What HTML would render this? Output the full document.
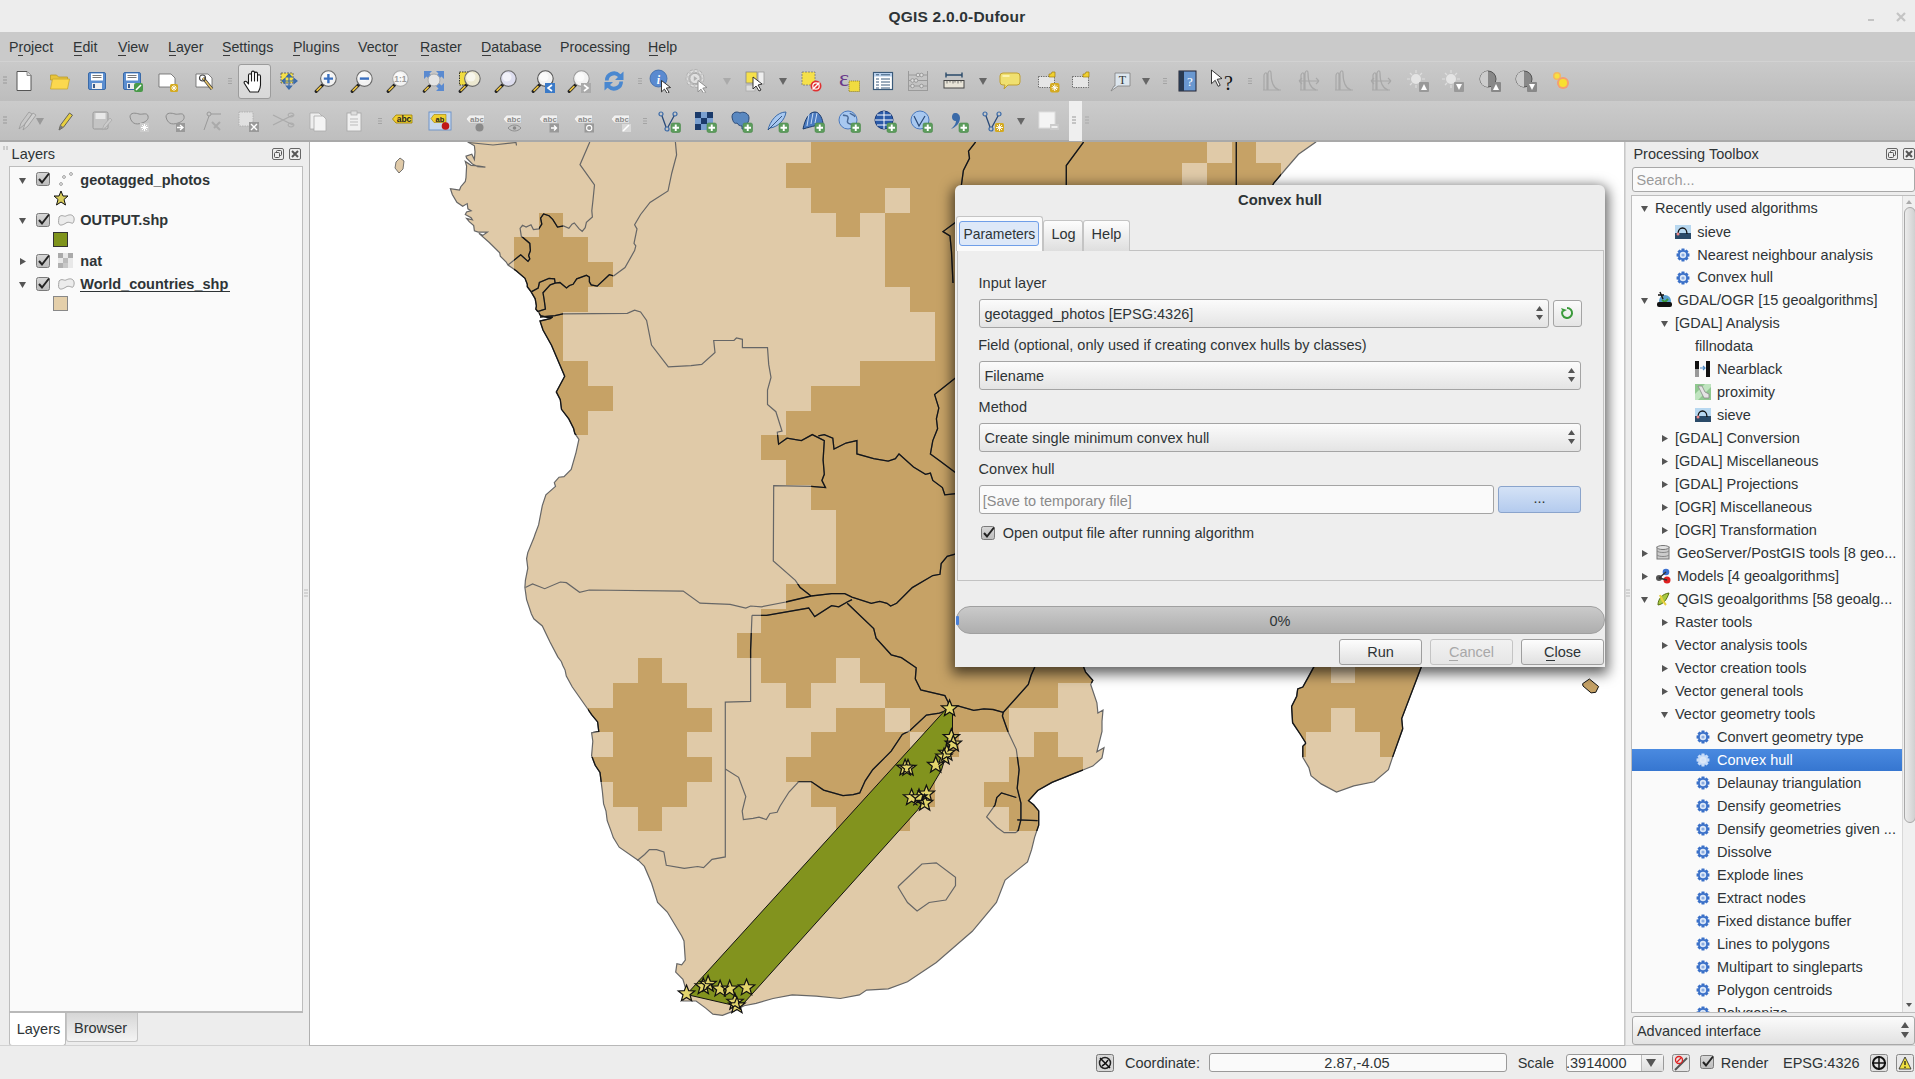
<!DOCTYPE html><html><head><meta charset="utf-8"><title>QGIS</title><style>
*{margin:0;padding:0;box-sizing:border-box}
html,body{width:1915px;height:1079px;overflow:hidden;background:#ededed;font-family:"Liberation Sans",sans-serif}
.t{position:absolute;white-space:pre;line-height:1.2;font-family:"Liberation Sans",sans-serif}
.r{position:absolute}
</style></head><body><div class="r" style="left:0px;top:0px;width:1915px;height:32px;background:#ededed"></div>
<div class="t" style="left:657.0px;width:600px;text-align:center;top:7.8px;font-size:15.5px;color:#2e3436;font-weight:bold;letter-spacing:0.2px">QGIS 2.0.0-Dufour</div>
<div class="r" style="left:1868px;top:19px;width:6px;height:2px;background:#c4c4c4"></div>
<svg class="r" style="left:1896px;top:12px" width="10" height="10" viewBox="0 0 10 10"><path d="M1 1l8 8M9 1l-8 8" stroke="#c4c4c4" stroke-width="2.2"/></svg>
<div class="r" style="left:0px;top:32px;width:1915px;height:30px;background:#cacaca"></div>
<div class="r" style="left:0px;top:61px;width:1915px;height:1px;background:#d2d2d2"></div>
<div class="t" style="left:9.0px;top:39.0px;font-size:14.2px;color:#2e3436;">Project</div>
<div class="t" style="left:73.0px;top:39.0px;font-size:14.2px;color:#2e3436;">Edit</div>
<div class="t" style="left:118.0px;top:39.0px;font-size:14.2px;color:#2e3436;">View</div>
<div class="t" style="left:168.0px;top:39.0px;font-size:14.2px;color:#2e3436;">Layer</div>
<div class="t" style="left:222.0px;top:39.0px;font-size:14.2px;color:#2e3436;">Settings</div>
<div class="t" style="left:293.0px;top:39.0px;font-size:14.2px;color:#2e3436;">Plugins</div>
<div class="t" style="left:358.0px;top:39.0px;font-size:14.2px;color:#2e3436;">Vector</div>
<div class="t" style="left:420.0px;top:39.0px;font-size:14.2px;color:#2e3436;">Raster</div>
<div class="t" style="left:481.0px;top:39.0px;font-size:14.2px;color:#2e3436;">Database</div>
<div class="t" style="left:560.0px;top:39.0px;font-size:14.2px;color:#2e3436;">Processing</div>
<div class="t" style="left:648.0px;top:39.0px;font-size:14.2px;color:#2e3436;">Help</div>
<div class="r" style="left:18px;top:55px;width:5px;height:1px;background:#3a3a3a"></div>
<div class="r" style="left:74px;top:55px;width:8px;height:1px;background:#3a3a3a"></div>
<div class="r" style="left:118px;top:55px;width:8px;height:1px;background:#3a3a3a"></div>
<div class="r" style="left:169px;top:55px;width:7px;height:1px;background:#3a3a3a"></div>
<div class="r" style="left:223px;top:55px;width:7px;height:1px;background:#3a3a3a"></div>
<div class="r" style="left:293px;top:55px;width:7px;height:1px;background:#3a3a3a"></div>
<div class="r" style="left:388px;top:55px;width:8px;height:1px;background:#3a3a3a"></div>
<div class="r" style="left:421px;top:55px;width:8px;height:1px;background:#3a3a3a"></div>
<div class="r" style="left:482px;top:55px;width:9px;height:1px;background:#3a3a3a"></div>
<div class="r" style="left:649px;top:55px;width:9px;height:1px;background:#3a3a3a"></div>
<div class="r" style="left:0px;top:62px;width:1915px;height:39px;background:linear-gradient(#cacaca,#bdbdbd)"></div>
<div class="r" style="left:238px;top:64px;width:33px;height:35px;background:linear-gradient(#e4e4e4,#d8d8d8);border:1px solid #9c9c9c;border-radius:3px"></div>
<svg class="r" style="left:12px;top:69px" width="24" height="24" viewBox="0 0 24 24"><path d="M5 2.5h10l4 4v15H5z" fill="#fff" stroke="#555" stroke-width="1"/><path d="M15 2.5v4h4" fill="#ddd" stroke="#777" stroke-width="0.8"/></svg>
<svg class="r" style="left:48px;top:69px" width="24" height="24" viewBox="0 0 24 24"><path d="M2.5 6h6l2 2h9v3H2.5z" fill="#e8c43a" stroke="#b89a2a" stroke-width="0.8"/><path d="M2.5 20l2-10h17l-2 10z" fill="#fbd84e" stroke="#c8a830" stroke-width="0.8"/></svg>
<svg class="r" style="left:85px;top:69px" width="24" height="24" viewBox="0 0 24 24"><rect x="3.5" y="3.5" width="17" height="17" rx="1.5" fill="#5b8ed0" stroke="#3a6aa8" stroke-width="1"/><rect x="6" y="4.5" width="12" height="7" fill="#fff"/><path d="M7.5 6.5h9M7.5 8.5h9" stroke="#555" stroke-width="0.8"/><rect x="7" y="14" width="10" height="6" fill="#eee"/><rect x="8" y="15" width="2" height="4" fill="#3a5a88"/></svg>
<svg class="r" style="left:120px;top:69px" width="24" height="24" viewBox="0 0 24 24"><rect x="3.5" y="3.5" width="17" height="17" rx="1.5" fill="#5b8ed0" stroke="#3a6aa8" stroke-width="1"/><rect x="6" y="4.5" width="12" height="7" fill="#fff"/><path d="M7.5 6.5h9M7.5 8.5h9" stroke="#555" stroke-width="0.8"/><rect x="7" y="14" width="10" height="6" fill="#eee"/><rect x="8" y="15" width="2" height="4" fill="#3a5a88"/><rect x="14" y="14" width="9" height="9" rx="2" fill="#4a9a4a"/><path d="M16 21l5-5" stroke="#fff" stroke-width="1.6"/></svg>
<svg class="r" style="left:156px;top:69px" width="24" height="24" viewBox="0 0 24 24"><path d="M3 5h12l4 4v9H3z" fill="#fff" stroke="#666" stroke-width="0.8"/><rect x="14" y="15" width="8" height="8" rx="1.5" fill="#d4aa20"/><path d="M18 16v6M15 19h6M16 17l4 4M20 17l-4 4" stroke="#fff" stroke-width="0.9"/></svg>
<svg class="r" style="left:193px;top:69px" width="24" height="24" viewBox="0 0 24 24"><path d="M3 5h12l4 4v9H3z" fill="#fff" stroke="#666" stroke-width="0.8"/><path d="M10 9l9 11" stroke="#333" stroke-width="3"/><path d="M10 9l9 11" stroke="#e4c26a" stroke-width="1.8"/><circle cx="9.5" cy="9" r="3" fill="none" stroke="#444" stroke-width="1.2"/></svg>
<svg class="r" style="left:218px;top:69px" width="24" height="24" viewBox="0 0 24 24"><path d="M10 9.5h4M10 12h4M10 14.5h4" stroke="#a4a4a4" stroke-width="1"/></svg>
<svg class="r" style="left:242px;top:69px" width="24" height="24" viewBox="0 0 24 24"><path d="M8 23C6 20 4 17 2.3 14.2C1.6 12.7 3.4 11.6 4.8 12.9L6.5 15V6.2C6.5 4.2 9.5 4.2 9.5 6.2V12V3.6C9.5 1.6 12.5 1.6 12.5 3.6V12V4.6C12.5 2.6 15.5 2.6 15.5 4.6V12V7.2C15.5 5.2 18.5 5.2 18.5 7.2V16C18.5 19 17.2 21 16.2 23Z" fill="#fff" stroke="#1a1a1a" stroke-width="1.1" stroke-linejoin="round"/></svg>
<svg class="r" style="left:277px;top:69px" width="24" height="24" viewBox="0 0 24 24"><rect x="4" y="4" width="12" height="10" fill="#f5e04a" stroke="#555" stroke-dasharray="2 1" stroke-width="0.8"/><path d="M12 6v13M6 12h13M12 5l-2.5 3h5zM12 20l-2.5-3h5zM5 12l3-2.5v5zM20 12l-3-2.5v5z" fill="#5b8ed0" stroke="#3a6aa8" stroke-width="1.2"/></svg>
<svg class="r" style="left:314px;top:69px" width="24" height="24" viewBox="0 0 24 24"><path d="M2.2 22.3L8.6 15.9" stroke="#222" stroke-width="3.2" stroke-linecap="round"/><path d="M2.6 21.9L7.4 17.1" stroke="#e8c040" stroke-width="1.7"/><circle cx="14.4" cy="9.6" r="7.8" fill="#f2f2f2" stroke="#6a6a6a" stroke-width="1.1"/><circle cx="13" cy="8" r="4.5" fill="#fff" opacity="0.6"/><path d="M9.8 9.6h9.2M14.4 5v9.2" stroke="#3a70c0" stroke-width="2.4"/></svg>
<svg class="r" style="left:350px;top:69px" width="24" height="24" viewBox="0 0 24 24"><path d="M2.2 22.3L8.6 15.9" stroke="#222" stroke-width="3.2" stroke-linecap="round"/><path d="M2.6 21.9L7.4 17.1" stroke="#e8c040" stroke-width="1.7"/><circle cx="14.4" cy="9.6" r="7.8" fill="#f2f2f2" stroke="#6a6a6a" stroke-width="1.1"/><circle cx="13" cy="8" r="4.5" fill="#fff" opacity="0.6"/><path d="M9.8 9.6h9.2" stroke="#3a70c0" stroke-width="2.4"/></svg>
<svg class="r" style="left:386px;top:69px" width="24" height="24" viewBox="0 0 24 24"><path d="M2.2 22.3L8.6 15.9" stroke="#222" stroke-width="3.2" stroke-linecap="round"/><path d="M2.6 21.9L7.4 17.1" stroke="#e8c040" stroke-width="1.7"/><circle cx="14.4" cy="9.6" r="7.8" fill="#f2f2f2" stroke="#aaa" stroke-width="1.1"/><circle cx="13" cy="8" r="4.5" fill="#fff" opacity="0.6"/><text x="14.4" y="12.8" font-size="8.5" font-weight="bold" text-anchor="middle" fill="#9a9a9a" font-family="Liberation Sans">1:1</text></svg>
<svg class="r" style="left:422px;top:69px" width="24" height="24" viewBox="0 0 24 24"><path d="M2 2h8l-2.5 2.5 3 3-3 3-3-3L2 10z" fill="#5a8ad0"/><path d="M22 2h-8l2.5 2.5-3 3 3 3 3-3L22 10z" fill="#5a8ad0"/><path d="M22 22h-8l2.5-2.5-3-3 3-3 3 3L22 14z" fill="#5a8ad0"/><circle cx="12" cy="11" r="6" fill="#e4e4e4" stroke="#aaa"/><path d="M2.2 22.3L7.5 17" stroke="#222" stroke-width="3" stroke-linecap="round"/><path d="M2.6 21.9L6.6 17.9" stroke="#e8c040" stroke-width="1.6"/></svg>
<svg class="r" style="left:458px;top:69px" width="24" height="24" viewBox="0 0 24 24"><rect x="1.5" y="3" width="13" height="13" fill="#f0dc40" stroke="#222" stroke-dasharray="1.5 1" stroke-width="0.9"/><path d="M2.2 22.3L8.6 15.9" stroke="#222" stroke-width="3.2" stroke-linecap="round"/><path d="M2.6 21.9L7.4 17.1" stroke="#e8c040" stroke-width="1.7"/><circle cx="14.4" cy="9.6" r="7.8" fill="#ece8d0" stroke="#6a6a6a" stroke-width="1.1"/><circle cx="13" cy="8" r="4.5" fill="#fff" opacity="0.6"/></svg>
<svg class="r" style="left:494px;top:69px" width="24" height="24" viewBox="0 0 24 24"><path d="M2.2 22.3L8.6 15.9" stroke="#222" stroke-width="3.2" stroke-linecap="round"/><path d="M2.6 21.9L7.4 17.1" stroke="#e8c040" stroke-width="1.7"/><circle cx="14.4" cy="9.6" r="7.8" fill="#dde" stroke="#6a6a6a" stroke-width="1.1"/><circle cx="13" cy="8" r="4.5" fill="#fff" opacity="0.6"/></svg>
<svg class="r" style="left:531px;top:69px" width="24" height="24" viewBox="0 0 24 24"><path d="M2.2 22.3L8.6 15.9" stroke="#222" stroke-width="3.2" stroke-linecap="round"/><path d="M2.6 21.9L7.4 17.1" stroke="#e8c040" stroke-width="1.7"/><circle cx="14.4" cy="9.6" r="7.8" fill="#f2f2f2" stroke="#555" stroke-width="1.1"/><circle cx="13" cy="8" r="4.5" fill="#fff" opacity="0.6"/><rect x="14" y="14" width="10" height="10" fill="#3a7ac8"/><path d="M21 16l-4 3 4 3" stroke="#fff" stroke-width="1.6" fill="none"/></svg>
<svg class="r" style="left:567px;top:69px" width="24" height="24" viewBox="0 0 24 24"><path d="M2.2 22.3L8.6 15.9" stroke="#222" stroke-width="3.2" stroke-linecap="round"/><path d="M2.6 21.9L7.4 17.1" stroke="#e8c040" stroke-width="1.7"/><circle cx="14.4" cy="9.6" r="7.8" fill="#f2f2f2" stroke="#999" stroke-width="1.1"/><circle cx="13" cy="8" r="4.5" fill="#fff" opacity="0.6"/><rect x="14" y="14" width="10" height="10" fill="#aaa"/><path d="M17 16l4 3-4 3" stroke="#fff" stroke-width="1.6" fill="none"/></svg>
<svg class="r" style="left:602px;top:69px" width="24" height="24" viewBox="0 0 24 24"><path d="M3 11.5A9 9 0 0 1 18.5 5.2L21.5 2.5V11H13l3-3A5.5 5.5 0 0 0 6.6 11.5z" fill="#4a88d0"/><path d="M21 12.5A9 9 0 0 1 5.5 18.8L2.5 21.5V13H11l-3 3a5.5 5.5 0 0 0 9.4-3.5z" fill="#4a88d0"/></svg>
<svg class="r" style="left:628px;top:69px" width="24" height="24" viewBox="0 0 24 24"><path d="M10 9.5h4M10 12h4M10 14.5h4" stroke="#a4a4a4" stroke-width="1"/></svg>
<svg class="r" style="left:649px;top:69px" width="24" height="24" viewBox="0 0 24 24"><circle cx="9.5" cy="9.5" r="8.5" fill="#5a8ad0" stroke="#3a68a8" stroke-width="0.8"/><text x="9.5" y="14.5" font-size="12" font-style="italic" font-weight="bold" text-anchor="middle" fill="#fff" font-family="Liberation Serif">i</text><path d="M12.5 11.5l9 7-4.2.6 2.8 4.2-1.9 1.1-2.8-4.3-2.9 2.8z" fill="#fff" stroke="#222" stroke-width="0.9"/></svg>
<svg class="r" style="left:685px;top:69px" width="24" height="24" viewBox="0 0 24 24"><circle cx="10" cy="9.5" r="7.6" fill="none" stroke="#a8a8a8" stroke-width="3.4" stroke-dasharray="2.8 1.6"/><circle cx="10" cy="9.5" r="7.6" fill="none" stroke="#dcdcdc" stroke-width="2" stroke-dasharray="2.8 1.6"/><circle cx="10" cy="9.5" r="5.2" fill="#e0e0e0" stroke="#a8a8a8" stroke-width="1"/><path d="M8.8 7v5l3.6-2.5z" fill="#b0b0b0"/><path d="M13 11.5l9 7-4.2.6 2.8 4.2-1.9 1.1-2.8-4.3-2.9 2.8z" fill="#fff" stroke="#888" stroke-width="0.9"/></svg>
<svg class="r" style="left:715px;top:69px" width="24" height="24" viewBox="0 0 24 24"><path d="M8 9h8l-4 7z" fill="#aaa"/></svg>
<svg class="r" style="left:743px;top:69px" width="24" height="24" viewBox="0 0 24 24"><rect x="3" y="3" width="11" height="11" fill="#f5e04a" stroke="#888" stroke-width="0.8"/><rect x="15" y="3" width="6" height="12" fill="#eee" stroke="#999" stroke-width="0.8"/><rect x="3" y="16" width="9" height="6" fill="#ddd" stroke="#aaa" stroke-width="0.8"/><path d="M10 8l9 7-4 1 3 5-2 1-3-5-3 3z" fill="#fff" stroke="#222" stroke-width="0.9"/></svg>
<svg class="r" style="left:771px;top:69px" width="24" height="24" viewBox="0 0 24 24"><path d="M8 9h8l-4 7z" fill="#666"/></svg>
<svg class="r" style="left:799px;top:69px" width="24" height="24" viewBox="0 0 24 24"><rect x="3" y="3" width="13" height="13" fill="#f5e04a" stroke="#777" stroke-dasharray="2 1" stroke-width="0.8"/><circle cx="17" cy="17" r="5.5" fill="#e03030"/><path d="M13.5 20.5l7-7" stroke="#fff" stroke-width="1.5"/><circle cx="17" cy="17" r="3.2" fill="none" stroke="#fff" stroke-width="1.2"/></svg>
<svg class="r" style="left:837px;top:69px" width="24" height="24" viewBox="0 0 24 24"><text x="7" y="17" font-size="24" fill="#6a3a8a" font-family="Liberation Serif" text-anchor="middle">ε</text><rect x="12" y="12" width="10.5" height="10.5" fill="#f0dc40" stroke="#8a7a20" stroke-dasharray="1.2 0.8" stroke-width="0.8"/></svg>
<svg class="r" style="left:871px;top:69px" width="24" height="24" viewBox="0 0 24 24"><rect x="2.5" y="3.5" width="19" height="17" fill="#fff" stroke="#3a5a7a" stroke-width="1.2"/><rect x="3" y="4" width="18" height="3.5" fill="#b8d0ec"/><path d="M5 5.8h3M10 5.8h9M5 10h3M10 10h9M5 13h3M10 13h9M5 16h3M10 16h9M5 19h3M10 19h9" stroke="#3a5a7a" stroke-width="1"/></svg>
<svg class="r" style="left:906px;top:69px" width="24" height="24" viewBox="0 0 24 24"><path d="M2.5 2v20M21.5 2v20M2.5 21.5h19M2.5 6h19M2.5 11.5h19M2.5 17h19" stroke="#9a9a9a" stroke-width="1"/><circle cx="12" cy="6" r="1.8" fill="#ddd" stroke="#999"/><circle cx="15.5" cy="6" r="1.8" fill="#ddd" stroke="#999"/><circle cx="6.5" cy="11.5" r="1.8" fill="#ddd" stroke="#999"/><circle cx="10" cy="11.5" r="1.8" fill="#ddd" stroke="#999"/><circle cx="6.5" cy="17" r="1.8" fill="#ddd" stroke="#999"/><circle cx="15.5" cy="17" r="1.8" fill="#ddd" stroke="#999"/></svg>
<svg class="r" style="left:942px;top:69px" width="24" height="24" viewBox="0 0 24 24"><path d="M4 6h16M4 3.5v5M20 3.5v5" stroke="#2a4a6a" stroke-width="1.4"/><rect x="2" y="11.5" width="20" height="7.5" fill="#e8e4d8" stroke="#444" stroke-width="1"/><path d="M5 11.5v3M8 11.5v2M11 11.5v3M13 11.5v2M16 11.5v3M19 11.5v2" stroke="#555" stroke-width="0.8"/></svg>
<svg class="r" style="left:971px;top:69px" width="24" height="24" viewBox="0 0 24 24"><path d="M8 9h8l-4 7z" fill="#666"/></svg>
<svg class="r" style="left:998px;top:69px" width="24" height="24" viewBox="0 0 24 24"><path d="M5 4h14a3 3 0 0 1 3 3v6a3 3 0 0 1-3 3h-9l-4 4 1-4H5a3 3 0 0 1-3-3V7a3 3 0 0 1 3-3z" fill="#f0e070" stroke="#c0a030" stroke-width="1"/><path d="M5 7h6" stroke="#fff8c0" stroke-width="1.5" stroke-linecap="round"/></svg>
<svg class="r" style="left:1036px;top:69px" width="24" height="24" viewBox="0 0 24 24"><rect x="2.5" y="7.5" width="16" height="11" fill="#e6e6e6" stroke="#555" stroke-dasharray="1.2 1.2" stroke-width="0.9"/><path d="M13 5h2l1-2h3v5h-6z" fill="#f0d030" stroke="#a08010" stroke-width="0.7"/><rect x="14" y="14" width="9.5" height="9.5" rx="2" fill="#d4aa20"/><path d="M18.75 15.5v6.5M15.5 18.75h6.5M16.5 16.5l4.5 4.5M21 16.5l-4.5 4.5" stroke="#fff" stroke-width="1"/></svg>
<svg class="r" style="left:1070px;top:69px" width="24" height="24" viewBox="0 0 24 24"><rect x="2.5" y="7.5" width="16" height="11" fill="#e6e6e6" stroke="#555" stroke-dasharray="1.2 1.2" stroke-width="0.9"/><path d="M13 5h2l1-2h3v5h-6z" fill="#f0d030" stroke="#a08010" stroke-width="0.7"/></svg>
<svg class="r" style="left:1108px;top:69px" width="24" height="24" viewBox="0 0 24 24"><path d="M7 4h15v13H10l-7 5 3-5H7z" fill="#dce6ee" stroke="#888" stroke-width="0.9"/><text x="14.5" y="14.5" font-size="12" text-anchor="middle" fill="#333" font-family="Liberation Serif">T</text></svg>
<svg class="r" style="left:1134px;top:69px" width="24" height="24" viewBox="0 0 24 24"><path d="M8 9h8l-4 7z" fill="#666"/></svg>
<svg class="r" style="left:1153px;top:69px" width="24" height="24" viewBox="0 0 24 24"><path d="M10 9.5h4M10 12h4M10 14.5h4" stroke="#a4a4a4" stroke-width="1"/></svg>
<svg class="r" style="left:1175px;top:69px" width="24" height="24" viewBox="0 0 24 24"><rect x="4" y="2" width="17" height="20" fill="#6a98d0" stroke="#223" stroke-width="1"/><rect x="4" y="2" width="5" height="20" fill="#2a3a50"/><text x="15" y="16.5" font-size="13" text-anchor="middle" fill="#fff" font-family="Liberation Serif">?</text></svg>
<svg class="r" style="left:1210px;top:69px" width="24" height="24" viewBox="0 0 24 24"><path d="M1.5 1l10.5 8.5-4.8.8 3 6-2 1-3-6-3.7 3.4z" fill="#fff" stroke="#222" stroke-width="0.9"/><text x="18.5" y="21" font-size="20" text-anchor="middle" fill="#111" font-family="Liberation Serif">?</text></svg>
<svg class="r" style="left:1238px;top:69px" width="24" height="24" viewBox="0 0 24 24"><path d="M10 9.5h4M10 12h4M10 14.5h4" stroke="#a4a4a4" stroke-width="1"/></svg>
<svg class="r" style="left:1260px;top:69px" width="24" height="24" viewBox="0 0 24 24"><path d="M4 21V6c1-3 3-3 3 0v15M8 21V4c1-3 3-3 3 0 0 8 2 15 8 17" fill="none" stroke="#a8a8a8" stroke-width="1.2"/><path d="M3 21h18" stroke="#a8a8a8"/></svg>
<svg class="r" style="left:1297px;top:69px" width="24" height="24" viewBox="0 0 24 24"><path d="M4 21V6c1-3 3-3 3 0v15M8 21V4c1-3 3-3 3 0 0 8 2 15 8 17" fill="none" stroke="#a8a8a8" stroke-width="1.2"/><path d="M3 21h18" stroke="#a8a8a8"/><path d="M2 12h20M2 12l3-3M2 12l3 3M22 12l-3-3M22 12l-3 3" stroke="#a8a8a8" stroke-width="1.1" fill="none"/></svg>
<svg class="r" style="left:1332px;top:69px" width="24" height="24" viewBox="0 0 24 24"><path d="M4 21V6c1-3 3-3 3 0v15M8 21V4c1-3 3-3 3 0 0 8 2 15 8 17" fill="none" stroke="#a8a8a8" stroke-width="1.2"/><path d="M3 21h18" stroke="#a8a8a8"/></svg>
<svg class="r" style="left:1369px;top:69px" width="24" height="24" viewBox="0 0 24 24"><path d="M4 21V6c1-3 3-3 3 0v15M8 21V4c1-3 3-3 3 0 0 8 2 15 8 17" fill="none" stroke="#a8a8a8" stroke-width="1.2"/><path d="M3 21h18" stroke="#a8a8a8"/><path d="M2 12h20M2 12l3-3M2 12l3 3M22 12l-3-3M22 12l-3 3" stroke="#a8a8a8" stroke-width="1.1" fill="none"/></svg>
<svg class="r" style="left:1406px;top:69px" width="24" height="24" viewBox="0 0 24 24"><circle cx="10" cy="10" r="5" fill="#e4e4e4"/><path d="M10 1v3M10 16v3M1 10h3M16 10h3M4 4l2 2M14 14l2 2M4 16l2-2M14 6l2-2" stroke="#ddd" stroke-width="1.2"/><rect x="13" y="13" width="10" height="10" rx="1" fill="#999"/><path d="M15 21h6l-3-6z" fill="#fff"/></svg>
<svg class="r" style="left:1441px;top:69px" width="24" height="24" viewBox="0 0 24 24"><circle cx="10" cy="10" r="5" fill="#e4e4e4"/><path d="M10 1v3M10 16v3M1 10h3M16 10h3M4 4l2 2M14 14l2 2M4 16l2-2M14 6l2-2" stroke="#ddd" stroke-width="1.2"/><rect x="13" y="13" width="10" height="10" rx="1" fill="#999"/><path d="M15 15h6l-3 6z" fill="#fff"/></svg>
<svg class="r" style="left:1478px;top:69px" width="24" height="24" viewBox="0 0 24 24"><circle cx="10" cy="10" r="8" fill="#888" stroke="#555" stroke-width="1"/><path d="M10 2a8 8 0 0 0 0 16z" fill="#ccc"/><rect x="13" y="13" width="10" height="10" rx="1" fill="#888"/><path d="M15 21h6l-3-6z" fill="#fff"/></svg>
<svg class="r" style="left:1514px;top:69px" width="24" height="24" viewBox="0 0 24 24"><circle cx="10" cy="10" r="8" fill="#888" stroke="#555" stroke-width="1"/><path d="M10 2a8 8 0 0 0 0 16z" fill="#ccc"/><rect x="13" y="13" width="10" height="10" rx="1" fill="#888"/><path d="M15 15h6l-3 6z" fill="#fff"/></svg>
<svg class="r" style="left:1549px;top:69px" width="24" height="24" viewBox="0 0 24 24"><circle cx="8" cy="7" r="4" fill="#f4b860"/><circle cx="8" cy="7" r="2.5" fill="#f8e040"/><circle cx="14" cy="14" r="6" fill="#f4a070"/><circle cx="14" cy="14" r="4" fill="#f8e030"/></svg>
<svg class="r" style="left:2px;top:75px" width="6" height="12" viewBox="0 0 6 12"><path d="M1 2h4M1 5h4M1 8h4" stroke="#999"/></svg>
<div class="r" style="left:0px;top:101px;width:1915px;height:40px;background:linear-gradient(#cbcbcb,#bebebe)"></div>
<div class="r" style="left:0px;top:140px;width:1915px;height:2px;background:#a9a9a9"></div>
<svg class="r" style="left:15px;top:109px" width="24" height="24" viewBox="0 0 24 24"><path d="M4 20l2-6 8-11 3 2-8 11z" fill="#c8c8c8" stroke="#999" stroke-width="0.8"/><path d="M8 21l2-6 8-11 3 2-8 11z" fill="#cfcfcf" stroke="#999" stroke-width="0.8"/></svg>
<svg class="r" style="left:28px;top:109px" width="24" height="24" viewBox="0 0 24 24"><path d="M8 9h8l-4 7z" fill="#999"/></svg>
<svg class="r" style="left:54px;top:109px" width="24" height="24" viewBox="0 0 24 24"><path d="M5 21l1.5-5 9-12 3 2.2-9 12z" fill="#e8d040" stroke="#555" stroke-width="0.9"/><path d="M5 21l1.5-5 3 2.2z" fill="#777"/></svg>
<svg class="r" style="left:90px;top:109px" width="24" height="24" viewBox="0 0 24 24"><rect x="3" y="3" width="15" height="17" rx="1.5" fill="#c4c4c4" stroke="#999" stroke-width="1"/><rect x="5.5" y="4" width="10" height="6" fill="#e8e8e8"/><path d="M12 21l2-5 6-7 2 2-6 7z" fill="#ccc" stroke="#aaa" stroke-width="0.8"/></svg>
<svg class="r" style="left:127px;top:109px" width="24" height="24" viewBox="0 0 24 24"><path d="M3 8c0-5 6-4 9-3s8-2 9 2-3 6-6 7-10 3-12-6z" fill="#c4c4c4" stroke="#8c8c8c" stroke-width="1"/><rect x="13" y="14" width="9" height="9" fill="#ccc"/><path d="M17.5 15v7M14 18.5h7M15 16l5 5M20 16l-5 5" stroke="#fff" stroke-width="1"/></svg>
<svg class="r" style="left:163px;top:109px" width="24" height="24" viewBox="0 0 24 24"><path d="M3 8c0-5 6-4 9-3s8-2 9 2-3 6-6 7-10 3-12-6z" fill="#c4c4c4" stroke="#8c8c8c" stroke-width="1"/><rect x="13" y="14" width="9" height="9" fill="#999"/><path d="M14 18.5h5M17 16l3 2.5-3 2.5" stroke="#fff" stroke-width="1.3" fill="none"/></svg>
<svg class="r" style="left:200px;top:109px" width="24" height="24" viewBox="0 0 24 24"><circle cx="9" cy="5" r="2" fill="none" stroke="#999"/><path d="M9 7L4 21M11 5h10" stroke="#999"/><path d="M12 13l8 8M20 13l-6 6" stroke="#aaa" stroke-width="2"/></svg>
<svg class="r" style="left:236px;top:109px" width="24" height="24" viewBox="0 0 24 24"><rect x="3" y="3" width="14" height="14" fill="#e0e0e0" stroke="#aaa" stroke-dasharray="1.5 1" stroke-width="0.8"/><rect x="13" y="13" width="10" height="10" fill="#999"/><path d="M15 15l6 6M21 15l-6 6" stroke="#fff" stroke-width="1.4"/></svg>
<svg class="r" style="left:271px;top:109px" width="24" height="24" viewBox="0 0 24 24"><path d="M2 6l20 10M2 16l20-10" stroke="#aaa" stroke-width="1.2"/><ellipse cx="20" cy="6" rx="3" ry="2" fill="none" stroke="#aaa"/><ellipse cx="20" cy="16" rx="3" ry="2" fill="none" stroke="#aaa"/></svg>
<svg class="r" style="left:306px;top:109px" width="24" height="24" viewBox="0 0 24 24"><path d="M4 4h9l3 3v13H4z" fill="#eee" stroke="#aaa" stroke-width="0.8"/><path d="M8 7h9l3 3v12H8z" fill="#f4f4f4" stroke="#aaa" stroke-width="0.8"/></svg>
<svg class="r" style="left:342px;top:109px" width="24" height="24" viewBox="0 0 24 24"><rect x="5" y="4" width="14" height="18" fill="#f0f0f0" stroke="#aaa" stroke-width="0.9"/><rect x="9" y="2" width="6" height="4" fill="#ddd" stroke="#aaa" stroke-width="0.7"/><path d="M8 10h8M8 13h8M8 16h8" stroke="#bbb"/></svg>
<svg class="r" style="left:368px;top:109px" width="24" height="24" viewBox="0 0 24 24"><path d="M10 9.5h4M10 12h4M10 14.5h4" stroke="#a4a4a4" stroke-width="1"/></svg>
<svg class="r" style="left:390px;top:109px" width="24" height="24" viewBox="0 0 24 24"><path d="M2.5 10l3.5-4h16v8H6z" fill="#f0d030" stroke="#a08000" stroke-width="0.8"/><text x="14" y="13.2" font-size="8.5" font-weight="bold" text-anchor="middle" fill="#222" font-family="Liberation Sans">abc</text></svg>
<svg class="r" style="left:428px;top:109px" width="24" height="24" viewBox="0 0 24 24"><rect x="1" y="3" width="22" height="18" fill="#c8d8ec" stroke="#6890c8" stroke-width="0.9"/><path d="M3 9.5l3-4h12v8H6z" fill="#f0d030" stroke="#a08000" stroke-width="0.6"/><text x="12" y="12.5" font-size="7.5" font-weight="bold" text-anchor="middle" fill="#222" font-family="Liberation Sans">ab</text><circle cx="17.5" cy="17" r="3.8" fill="#c01818"/></svg>
<svg class="r" style="left:463px;top:109px" width="24" height="24" viewBox="0 0 24 24"><path d="M3 10l3.5-4h15v8H6.5z" fill="#f0f0f0" stroke="#bbb" stroke-width="0.7"/><text x="14" y="13" font-size="8" font-weight="bold" text-anchor="middle" fill="#8a8a8a" font-family="Liberation Sans">abc</text><circle cx="16.5" cy="18.5" r="4" fill="#8a8a8a"/></svg>
<svg class="r" style="left:500px;top:109px" width="24" height="24" viewBox="0 0 24 24"><path d="M3 10l3.5-4h15v8H6.5z" fill="#f0f0f0" stroke="#bbb" stroke-width="0.7"/><text x="14" y="13" font-size="8" font-weight="bold" text-anchor="middle" fill="#8a8a8a" font-family="Liberation Sans">abc</text><path d="M8 19c3.5-4 9.5-4 13 0-3.5 4-9.5 4-13 0z" fill="none" stroke="#888" stroke-width="0.9"/><circle cx="14.5" cy="19" r="1.8" fill="#888"/></svg>
<svg class="r" style="left:536px;top:109px" width="24" height="24" viewBox="0 0 24 24"><path d="M3 10l3.5-4h15v8H6.5z" fill="#f0f0f0" stroke="#bbb" stroke-width="0.7"/><text x="14" y="13" font-size="8" font-weight="bold" text-anchor="middle" fill="#8a8a8a" font-family="Liberation Sans">abc</text><rect x="13.5" y="14.5" width="9.5" height="9" fill="#999"/><path d="M15 19h5M18 16.5l2.5 2.5-2.5 2.5" stroke="#fff" stroke-width="1.4" fill="none"/></svg>
<svg class="r" style="left:571px;top:109px" width="24" height="24" viewBox="0 0 24 24"><path d="M3 10l3.5-4h15v8H6.5z" fill="#f0f0f0" stroke="#bbb" stroke-width="0.7"/><text x="14" y="13" font-size="8" font-weight="bold" text-anchor="middle" fill="#8a8a8a" font-family="Liberation Sans">abc</text><rect x="13.5" y="14.5" width="9.5" height="9" fill="#999"/><circle cx="18.2" cy="19" r="2.6" fill="none" stroke="#fff" stroke-width="1.1"/></svg>
<svg class="r" style="left:608px;top:109px" width="24" height="24" viewBox="0 0 24 24"><path d="M3 10l3.5-4h15v8H6.5z" fill="#f0f0f0" stroke="#bbb" stroke-width="0.7"/><text x="14" y="13" font-size="8" font-weight="bold" text-anchor="middle" fill="#8a8a8a" font-family="Liberation Sans">abc</text><rect x="14" y="15" width="9" height="8" fill="#d8d8d8"/><path d="M15 22l6-6" stroke="#fff" stroke-width="1.6"/></svg>
<svg class="r" style="left:633px;top:109px" width="24" height="24" viewBox="0 0 24 24"><path d="M10 9.5h4M10 12h4M10 14.5h4" stroke="#a4a4a4" stroke-width="1"/></svg>
<svg class="r" style="left:657px;top:109px" width="24" height="24" viewBox="0 0 24 24"><circle cx="4" cy="5" r="2" fill="none" stroke="#3a6aa8" stroke-width="1.2"/><circle cx="18" cy="5" r="2" fill="none" stroke="#3a6aa8" stroke-width="1.2"/><circle cx="10" cy="20" r="2" fill="none" stroke="#3a6aa8" stroke-width="1.2"/><path d="M5 7l4 11M11 18l6-11" stroke="#2a4a78" stroke-width="1.3"/><rect x="14" y="14" width="9.5" height="9.5" rx="1.8" fill="#5c9c5c" stroke="#4a8a4a" stroke-width="0.6"/><path d="M18.75 15.5v6.5M15.5 18.75h6.5" stroke="#fff" stroke-width="1.9"/></svg>
<svg class="r" style="left:693px;top:109px" width="24" height="24" viewBox="0 0 24 24"><rect x="2" y="3" width="18" height="18" fill="#7aa0d0"/><rect x="2" y="3" width="6" height="6" fill="#1a3a6a"/><rect x="14" y="3" width="6" height="6" fill="#1a3a6a"/><rect x="8" y="9" width="6" height="6" fill="#1a3a6a"/><rect x="2" y="15" width="6" height="6" fill="#1a3a6a"/><rect x="14" y="14" width="9.5" height="9.5" rx="1.8" fill="#5c9c5c" stroke="#4a8a4a" stroke-width="0.6"/><path d="M18.75 15.5v6.5M15.5 18.75h6.5" stroke="#fff" stroke-width="1.9"/></svg>
<svg class="r" style="left:729px;top:109px" width="24" height="24" viewBox="0 0 24 24"><path d="M3 8c0-5 5-6 8-4 3-2 9 0 9 5 0 4-2 6-4 7v4h-3v-3c-2 0-4-1-5-3-2 1-4 0-5-6z" fill="#5a88c0" stroke="#2a4a78" stroke-width="1"/><rect x="14" y="14" width="9.5" height="9.5" rx="1.8" fill="#5c9c5c" stroke="#4a8a4a" stroke-width="0.6"/><path d="M18.75 15.5v6.5M15.5 18.75h6.5" stroke="#fff" stroke-width="1.9"/></svg>
<svg class="r" style="left:765px;top:109px" width="24" height="24" viewBox="0 0 24 24"><path d="M3 21C5 12 12 3 21 3c-1 8-8 15-16 16z" fill="#a8c8f0" stroke="#3a6aa8" stroke-width="1"/><path d="M3 21L17 7" stroke="#2a4a78" stroke-width="0.9"/><rect x="14" y="14" width="9.5" height="9.5" rx="1.8" fill="#5c9c5c" stroke="#4a8a4a" stroke-width="0.6"/><path d="M18.75 15.5v6.5M15.5 18.75h6.5" stroke="#fff" stroke-width="1.9"/></svg>
<svg class="r" style="left:801px;top:109px" width="24" height="24" viewBox="0 0 24 24"><path d="M2 20C4 10 8 3 14 3c5 0 8 8 8 12-4 1-10 2-20 5z" fill="#4a7ac0" stroke="#1a3a6a" stroke-width="1"/><path d="M6 17l2-12M10 15l2-11M14 14l2-10" stroke="#c8dcf4" stroke-width="1"/><rect x="14" y="14" width="9.5" height="9.5" rx="1.8" fill="#5c9c5c" stroke="#4a8a4a" stroke-width="0.6"/><path d="M18.75 15.5v6.5M15.5 18.75h6.5" stroke="#fff" stroke-width="1.9"/></svg>
<svg class="r" style="left:837px;top:109px" width="24" height="24" viewBox="0 0 24 24"><circle cx="11" cy="11" r="9" fill="#a8c8f0" stroke="#4a7ac0" stroke-width="1"/><path d="M6 6c2 1 4 0 5 2s-2 4 0 6 4 0 5 3M13 4c1 2 4 1 5 4" stroke="#4a6a98" stroke-width="1.5" fill="none"/><rect x="14" y="14" width="9.5" height="9.5" rx="1.8" fill="#5c9c5c" stroke="#4a8a4a" stroke-width="0.6"/><path d="M18.75 15.5v6.5M15.5 18.75h6.5" stroke="#fff" stroke-width="1.9"/></svg>
<svg class="r" style="left:873px;top:109px" width="24" height="24" viewBox="0 0 24 24"><circle cx="11" cy="11" r="9" fill="#2a5aa8" stroke="#1a3a78" stroke-width="1"/><path d="M2 11h18M11 2v18M4 6h14M4 16h14" stroke="#fff" stroke-width="1"/><rect x="14" y="14" width="9.5" height="9.5" rx="1.8" fill="#5c9c5c" stroke="#4a8a4a" stroke-width="0.6"/><path d="M18.75 15.5v6.5M15.5 18.75h6.5" stroke="#fff" stroke-width="1.9"/></svg>
<svg class="r" style="left:909px;top:109px" width="24" height="24" viewBox="0 0 24 24"><circle cx="11" cy="11" r="9" fill="#a8c8f0" stroke="#4a7ac0" stroke-width="1"/><path d="M5 7l5 10 6-10" stroke="#2a4a78" stroke-width="1.2" fill="none"/><rect x="14" y="14" width="9.5" height="9.5" rx="1.8" fill="#5c9c5c" stroke="#4a8a4a" stroke-width="0.6"/><path d="M18.75 15.5v6.5M15.5 18.75h6.5" stroke="#fff" stroke-width="1.9"/></svg>
<svg class="r" style="left:945px;top:109px" width="24" height="24" viewBox="0 0 24 24"><path d="M10 4c3 0 5 2 5 5 0 5-4 9-9 11 3-3 5-5 5-8-3 0-4-2-4-4s1-4 3-4z" fill="#3a6aa8"/><rect x="14" y="14" width="9.5" height="9.5" rx="1.8" fill="#5c9c5c" stroke="#4a8a4a" stroke-width="0.6"/><path d="M18.75 15.5v6.5M15.5 18.75h6.5" stroke="#fff" stroke-width="1.9"/></svg>
<svg class="r" style="left:981px;top:109px" width="24" height="24" viewBox="0 0 24 24"><circle cx="4" cy="5" r="2" fill="none" stroke="#3a6aa8" stroke-width="1.2"/><circle cx="18" cy="5" r="2" fill="none" stroke="#3a6aa8" stroke-width="1.2"/><circle cx="10" cy="20" r="2" fill="none" stroke="#3a6aa8" stroke-width="1.2"/><path d="M5 7l4 11M11 18l6-11" stroke="#2a4a78" stroke-width="1.3"/><rect x="14" y="14" width="9" height="9" rx="1.5" fill="#d4aa20"/><path d="M18.5 15v7M15 18.5h7M16 16l5 5M21 16l-5 5" stroke="#fff" stroke-width="0.9"/></svg>
<svg class="r" style="left:1009px;top:109px" width="24" height="24" viewBox="0 0 24 24"><path d="M8 9h8l-4 7z" fill="#666"/></svg>
<svg class="r" style="left:1036px;top:109px" width="24" height="24" viewBox="0 0 24 24"><rect x="3" y="3" width="16" height="16" fill="#f4f4f4" stroke="#ddd"/><rect x="14" y="15" width="9" height="6" fill="#ccc"/><path d="M15.5 18h6" stroke="#fff" stroke-width="1.4"/></svg>
<div class="r" style="left:1069px;top:101px;width:13px;height:40px;background:#efefef"></div>
<svg class="r" style="left:2px;top:115px" width="6" height="12" viewBox="0 0 6 12"><path d="M1 2h4M1 5h4M1 8h4" stroke="#999"/></svg>
<svg class="r" style="left:1071px;top:115px" width="6" height="12" viewBox="0 0 6 12"><path d="M1 2h4M1 5h4M1 8h4" stroke="#999"/></svg>
<svg class="r" style="left:1084px;top:115px" width="6" height="12" viewBox="0 0 6 12"><path d="M1 2h4M1 5h4M1 8h4" stroke="#aaa"/></svg>
<svg id="map" width="1915" height="1079" viewBox="0 0 1915 1079" style="position:absolute;left:0;top:0" shape-rendering="crispEdges">
<defs><clipPath id="mc"><rect x="310" y="142" width="1314" height="903"/></clipPath>
<clipPath id="land"><polygon points="467.9,142.0 467.9,130.0 1320.0,130.0 1315.8,142.0 1298.5,154.3 1286.2,168.5 1274.0,182.8 1200.0,320.0 1120.0,520.0 1083.6,667.0 1085.6,672.2 1092.8,680.4 1090.7,684.5 1096.9,702.8 1097.9,713.0 1103.0,710.0 1102.0,721.2 1102.0,731.4 1096.9,751.8 1104.0,747.7 1102.0,757.9 1092.8,766.1 1072.4,774.2 1052.0,782.4 1037.7,790.5 1028.5,800.7 1033.6,804.8 1038.7,810.9 1038.7,825.2 1034.6,837.4 1031.6,849.7 1027.5,861.9 1017.3,870.1 1005.1,880.0 996.4,902.5 972.3,931.3 936.3,962.5 907.5,981.7 888.3,988.9 866.6,990.1 859.4,994.9 840.2,998.5 816.2,996.1 792.2,994.9 773.0,998.5 756.1,1003.3 744.1,1005.7 734.5,1010.6 722.5,1015.4 712.9,1014.2 705.7,1008.1 696.1,1001.0 682.9,1001.0 686.5,991.3 682.9,979.3 675.7,972.1 676.9,963.7 681.7,964.9 685.3,960.1 684.0,940.9 681.7,936.0 667.3,912.0 657.6,902.5 651.6,883.2 644.4,866.4 638.4,860.4 619.2,847.2 613.3,837.6 610.8,830.4 607.2,820.7 606.0,811.1 603.6,803.9 602.4,791.8 601.2,782.2 600.0,772.5 595.2,765.3 591.6,755.7 592.8,741.2 591.6,732.8 598.8,731.6 597.6,721.9 591.6,714.7 586.7,707.5 572.3,687.0 566.3,676.1 565.1,670.1 562.7,665.3 561.4,661.7 557.8,656.9 550.0,642.0 542.3,626.0 533.8,618.8 531.4,614.0 526.6,599.6 524.9,587.5 525.4,580.3 527.8,568.2 526.6,558.6 527.8,552.6 533.8,538.1 535.0,534.5 538.6,524.9 542.3,505.6 545.9,494.8 555.5,486.4 554.3,482.7 559.0,477.2 564.0,476.7 571.2,469.5 576.0,452.6 578.9,439.4 574.8,433.4 573.6,428.5 568.8,418.9 561.5,409.3 560.3,399.6 556.3,391.9 564.7,376.3 551.5,345.3 543.0,330.0 540.0,321.0 550.2,318.7 552.7,316.9 547.8,317.5 540.6,315.7 538.2,312.0 535.8,309.0 536.4,306.0 535.2,298.8 531.0,291.6 527.3,286.7 527.3,284.3 525.0,278.3 516.5,271.0 508.0,265.0 506.2,262.0 500.3,256.1 499.7,252.9 489.3,242.5 478.9,233.4 482.8,235.4 487.4,232.1 478.3,232.1 474.4,230.8 473.7,225.6 469.2,221.7 466.6,218.5 472.4,219.8 471.1,217.8 465.3,214.6 466.6,212.0 471.1,210.7 467.9,208.8 467.2,203.6 462.7,206.2 456.9,202.3 452.3,194.5 450.4,188.7 454.9,189.3 459.5,190.0 460.8,186.7 465.3,181.5 466.0,177.6 466.6,166.0 465.3,161.4 471.1,165.3 478.9,166.0 485.4,167.2 477.6,166.6 472.4,164.0 466.6,158.2 466.0,156.2 471.8,154.3 474.4,159.5 475.0,151.7 474.4,145.8"/><polygon points="1314.0,666.6 1307.9,677.9 1302.8,687.0 1297.7,689.0 1296.7,696.2 1291.6,706.4 1292.6,722.7 1300.8,735.0 1305.9,743.1 1302.8,746.2 1302.8,757.4 1308.9,767.6 1311.0,775.7 1321.2,783.9 1336.5,792.0 1353.8,785.9 1374.2,781.8 1388.4,769.6 1392.5,757.4 1402.7,728.8 1401.7,718.6 1421.0,667.7 1430.0,640.0 1320.0,640.0"/></clipPath></defs>
<g clip-path="url(#mc)">
<rect x="310" y="142" width="1314" height="903" fill="#ffffff"/>
<g shape-rendering="geometricPrecision"><polygon points="467.9,142.0 467.9,130.0 1320.0,130.0 1315.8,142.0 1298.5,154.3 1286.2,168.5 1274.0,182.8 1200.0,320.0 1120.0,520.0 1083.6,667.0 1085.6,672.2 1092.8,680.4 1090.7,684.5 1096.9,702.8 1097.9,713.0 1103.0,710.0 1102.0,721.2 1102.0,731.4 1096.9,751.8 1104.0,747.7 1102.0,757.9 1092.8,766.1 1072.4,774.2 1052.0,782.4 1037.7,790.5 1028.5,800.7 1033.6,804.8 1038.7,810.9 1038.7,825.2 1034.6,837.4 1031.6,849.7 1027.5,861.9 1017.3,870.1 1005.1,880.0 996.4,902.5 972.3,931.3 936.3,962.5 907.5,981.7 888.3,988.9 866.6,990.1 859.4,994.9 840.2,998.5 816.2,996.1 792.2,994.9 773.0,998.5 756.1,1003.3 744.1,1005.7 734.5,1010.6 722.5,1015.4 712.9,1014.2 705.7,1008.1 696.1,1001.0 682.9,1001.0 686.5,991.3 682.9,979.3 675.7,972.1 676.9,963.7 681.7,964.9 685.3,960.1 684.0,940.9 681.7,936.0 667.3,912.0 657.6,902.5 651.6,883.2 644.4,866.4 638.4,860.4 619.2,847.2 613.3,837.6 610.8,830.4 607.2,820.7 606.0,811.1 603.6,803.9 602.4,791.8 601.2,782.2 600.0,772.5 595.2,765.3 591.6,755.7 592.8,741.2 591.6,732.8 598.8,731.6 597.6,721.9 591.6,714.7 586.7,707.5 572.3,687.0 566.3,676.1 565.1,670.1 562.7,665.3 561.4,661.7 557.8,656.9 550.0,642.0 542.3,626.0 533.8,618.8 531.4,614.0 526.6,599.6 524.9,587.5 525.4,580.3 527.8,568.2 526.6,558.6 527.8,552.6 533.8,538.1 535.0,534.5 538.6,524.9 542.3,505.6 545.9,494.8 555.5,486.4 554.3,482.7 559.0,477.2 564.0,476.7 571.2,469.5 576.0,452.6 578.9,439.4 574.8,433.4 573.6,428.5 568.8,418.9 561.5,409.3 560.3,399.6 556.3,391.9 564.7,376.3 551.5,345.3 543.0,330.0 540.0,321.0 550.2,318.7 552.7,316.9 547.8,317.5 540.6,315.7 538.2,312.0 535.8,309.0 536.4,306.0 535.2,298.8 531.0,291.6 527.3,286.7 527.3,284.3 525.0,278.3 516.5,271.0 508.0,265.0 506.2,262.0 500.3,256.1 499.7,252.9 489.3,242.5 478.9,233.4 482.8,235.4 487.4,232.1 478.3,232.1 474.4,230.8 473.7,225.6 469.2,221.7 466.6,218.5 472.4,219.8 471.1,217.8 465.3,214.6 466.6,212.0 471.1,210.7 467.9,208.8 467.2,203.6 462.7,206.2 456.9,202.3 452.3,194.5 450.4,188.7 454.9,189.3 459.5,190.0 460.8,186.7 465.3,181.5 466.0,177.6 466.6,166.0 465.3,161.4 471.1,165.3 478.9,166.0 485.4,167.2 477.6,166.6 472.4,164.0 466.6,158.2 466.0,156.2 471.8,154.3 474.4,159.5 475.0,151.7 474.4,145.8" fill="#e0caa8"/><polygon points="1314.0,666.6 1307.9,677.9 1302.8,687.0 1297.7,689.0 1296.7,696.2 1291.6,706.4 1292.6,722.7 1300.8,735.0 1305.9,743.1 1302.8,746.2 1302.8,757.4 1308.9,767.6 1311.0,775.7 1321.2,783.9 1336.5,792.0 1353.8,785.9 1374.2,781.8 1388.4,769.6 1392.5,757.4 1402.7,728.8 1401.7,718.6 1421.0,667.7 1430.0,640.0 1320.0,640.0" fill="#e0caa8"/></g>
<g clip-path="url(#land)" fill="#c6a266"><rect x="810.75" y="138.25" width="396.00" height="24.75"/><rect x="1231.50" y="138.25" width="24.75" height="24.75"/><rect x="786.00" y="163.00" width="396.00" height="24.75"/><rect x="1206.75" y="163.00" width="74.25" height="24.75"/><rect x="810.75" y="187.75" width="74.25" height="24.75"/><rect x="909.75" y="187.75" width="99.00" height="24.75"/><rect x="538.50" y="212.50" width="24.75" height="24.75"/><rect x="835.50" y="212.50" width="24.75" height="24.75"/><rect x="885.00" y="212.50" width="123.75" height="24.75"/><rect x="513.75" y="237.25" width="74.25" height="24.75"/><rect x="885.00" y="237.25" width="123.75" height="24.75"/><rect x="513.75" y="262.00" width="99.00" height="24.75"/><rect x="885.00" y="262.00" width="123.75" height="24.75"/><rect x="513.75" y="286.75" width="74.25" height="24.75"/><rect x="909.75" y="286.75" width="99.00" height="24.75"/><rect x="538.50" y="311.50" width="24.75" height="24.75"/><rect x="934.50" y="311.50" width="74.25" height="24.75"/><rect x="538.50" y="336.25" width="24.75" height="24.75"/><rect x="934.50" y="336.25" width="74.25" height="24.75"/><rect x="538.50" y="361.00" width="49.50" height="24.75"/><rect x="860.25" y="361.00" width="148.50" height="24.75"/><rect x="538.50" y="385.75" width="74.25" height="24.75"/><rect x="810.75" y="385.75" width="198.00" height="24.75"/><rect x="538.50" y="410.50" width="49.50" height="24.75"/><rect x="786.00" y="410.50" width="222.75" height="24.75"/><rect x="761.25" y="435.25" width="247.50" height="24.75"/><rect x="786.00" y="460.00" width="222.75" height="24.75"/><rect x="810.75" y="484.75" width="198.00" height="24.75"/><rect x="835.50" y="509.50" width="173.25" height="24.75"/><rect x="835.50" y="534.25" width="173.25" height="24.75"/><rect x="835.50" y="559.00" width="173.25" height="24.75"/><rect x="786.00" y="583.75" width="222.75" height="24.75"/><rect x="761.25" y="608.50" width="247.50" height="24.75"/><rect x="736.50" y="633.25" width="396.00" height="24.75"/><rect x="637.50" y="658.00" width="24.75" height="24.75"/><rect x="761.25" y="658.00" width="74.25" height="24.75"/><rect x="860.25" y="658.00" width="247.50" height="24.75"/><rect x="1281.00" y="658.00" width="49.50" height="24.75"/><rect x="1355.25" y="658.00" width="74.25" height="24.75"/><rect x="612.75" y="682.75" width="74.25" height="24.75"/><rect x="786.00" y="682.75" width="24.75" height="24.75"/><rect x="885.00" y="682.75" width="173.25" height="24.75"/><rect x="1281.00" y="682.75" width="148.50" height="24.75"/><rect x="588.00" y="707.50" width="123.75" height="24.75"/><rect x="835.50" y="707.50" width="49.50" height="24.75"/><rect x="909.75" y="707.50" width="99.00" height="24.75"/><rect x="1281.00" y="707.50" width="49.50" height="24.75"/><rect x="1355.25" y="707.50" width="74.25" height="24.75"/><rect x="612.75" y="732.25" width="74.25" height="24.75"/><rect x="810.75" y="732.25" width="99.00" height="24.75"/><rect x="934.50" y="732.25" width="24.75" height="24.75"/><rect x="1033.50" y="732.25" width="24.75" height="24.75"/><rect x="1281.00" y="732.25" width="24.75" height="24.75"/><rect x="1380.00" y="732.25" width="24.75" height="24.75"/><rect x="588.00" y="757.00" width="123.75" height="24.75"/><rect x="786.00" y="757.00" width="148.50" height="24.75"/><rect x="1008.75" y="757.00" width="74.25" height="24.75"/><rect x="612.75" y="781.75" width="74.25" height="24.75"/><rect x="810.75" y="781.75" width="123.75" height="24.75"/><rect x="984.00" y="781.75" width="74.25" height="24.75"/><rect x="637.50" y="806.50" width="24.75" height="24.75"/><rect x="835.50" y="806.50" width="74.25" height="24.75"/><rect x="1008.75" y="806.50" width="49.50" height="24.75"/></g>
<defs><clipPath id="dk"><rect x="810.75" y="138.25" width="396.00" height="24.75"/><rect x="1231.50" y="138.25" width="24.75" height="24.75"/><rect x="786.00" y="163.00" width="396.00" height="24.75"/><rect x="1206.75" y="163.00" width="74.25" height="24.75"/><rect x="810.75" y="187.75" width="74.25" height="24.75"/><rect x="909.75" y="187.75" width="99.00" height="24.75"/><rect x="538.50" y="212.50" width="24.75" height="24.75"/><rect x="835.50" y="212.50" width="24.75" height="24.75"/><rect x="885.00" y="212.50" width="123.75" height="24.75"/><rect x="513.75" y="237.25" width="74.25" height="24.75"/><rect x="885.00" y="237.25" width="123.75" height="24.75"/><rect x="513.75" y="262.00" width="99.00" height="24.75"/><rect x="885.00" y="262.00" width="123.75" height="24.75"/><rect x="513.75" y="286.75" width="74.25" height="24.75"/><rect x="909.75" y="286.75" width="99.00" height="24.75"/><rect x="538.50" y="311.50" width="24.75" height="24.75"/><rect x="934.50" y="311.50" width="74.25" height="24.75"/><rect x="538.50" y="336.25" width="24.75" height="24.75"/><rect x="934.50" y="336.25" width="74.25" height="24.75"/><rect x="538.50" y="361.00" width="49.50" height="24.75"/><rect x="860.25" y="361.00" width="148.50" height="24.75"/><rect x="538.50" y="385.75" width="74.25" height="24.75"/><rect x="810.75" y="385.75" width="198.00" height="24.75"/><rect x="538.50" y="410.50" width="49.50" height="24.75"/><rect x="786.00" y="410.50" width="222.75" height="24.75"/><rect x="761.25" y="435.25" width="247.50" height="24.75"/><rect x="786.00" y="460.00" width="222.75" height="24.75"/><rect x="810.75" y="484.75" width="198.00" height="24.75"/><rect x="835.50" y="509.50" width="173.25" height="24.75"/><rect x="835.50" y="534.25" width="173.25" height="24.75"/><rect x="835.50" y="559.00" width="173.25" height="24.75"/><rect x="786.00" y="583.75" width="222.75" height="24.75"/><rect x="761.25" y="608.50" width="247.50" height="24.75"/><rect x="736.50" y="633.25" width="396.00" height="24.75"/><rect x="637.50" y="658.00" width="24.75" height="24.75"/><rect x="761.25" y="658.00" width="74.25" height="24.75"/><rect x="860.25" y="658.00" width="247.50" height="24.75"/><rect x="1281.00" y="658.00" width="49.50" height="24.75"/><rect x="1355.25" y="658.00" width="74.25" height="24.75"/><rect x="612.75" y="682.75" width="74.25" height="24.75"/><rect x="786.00" y="682.75" width="24.75" height="24.75"/><rect x="885.00" y="682.75" width="173.25" height="24.75"/><rect x="1281.00" y="682.75" width="148.50" height="24.75"/><rect x="588.00" y="707.50" width="123.75" height="24.75"/><rect x="835.50" y="707.50" width="49.50" height="24.75"/><rect x="909.75" y="707.50" width="99.00" height="24.75"/><rect x="1281.00" y="707.50" width="49.50" height="24.75"/><rect x="1355.25" y="707.50" width="74.25" height="24.75"/><rect x="612.75" y="732.25" width="74.25" height="24.75"/><rect x="810.75" y="732.25" width="99.00" height="24.75"/><rect x="934.50" y="732.25" width="24.75" height="24.75"/><rect x="1033.50" y="732.25" width="24.75" height="24.75"/><rect x="1281.00" y="732.25" width="24.75" height="24.75"/><rect x="1380.00" y="732.25" width="24.75" height="24.75"/><rect x="588.00" y="757.00" width="123.75" height="24.75"/><rect x="786.00" y="757.00" width="148.50" height="24.75"/><rect x="1008.75" y="757.00" width="74.25" height="24.75"/><rect x="612.75" y="781.75" width="74.25" height="24.75"/><rect x="810.75" y="781.75" width="123.75" height="24.75"/><rect x="984.00" y="781.75" width="74.25" height="24.75"/><rect x="637.50" y="806.50" width="24.75" height="24.75"/><rect x="835.50" y="806.50" width="74.25" height="24.75"/><rect x="1008.75" y="806.50" width="49.50" height="24.75"/></clipPath></defs>
<g fill="none" shape-rendering="geometricPrecision" stroke="#666" stroke-width="1.2"><polyline points="467.9,142.5 493.0,145.0 516.0,142.5 516.5,145.5"/><polyline points="593.0,200.0 591.8,210.8 592.4,216.9 586.4,222.3 585.2,227.7 582.2,231.3 579.2,228.9 574.3,222.9 572.0,224.1 568.9,228.3 563.5,225.9 557.5,227.1 552.7,219.3 549.0,215.7 543.6,213.9 540.6,218.1 541.8,224.1 538.8,228.9 533.4,229.5 531.0,224.7 526.1,227.1 522.5,225.3 520.1,228.3 521.3,236.1 529.8,243.4 530.4,250.6 528.6,255.4 529.8,259.0 528.0,261.4 520.7,254.8 508.0,265.0"/><polyline points="589.8,142.0 580.0,164.7 594.5,185.0 593.0,200.0"/><polyline points="675.4,142.0 676.6,155.0 671.8,173.0 668.0,191.0 650.0,202.4 640.6,214.5 634.6,224.7 637.0,228.9 634.0,243.4 635.8,245.8 634.6,250.6 625.0,267.5 613.5,275.9"/><polyline points="613.5,275.9 609.3,274.7 597.2,286.1 591.2,284.9 589.4,281.9 589.4,277.1 586.4,275.3 576.7,278.9 573.1,284.3 569.5,285.5 566.5,288.0 559.9,282.5 555.1,283.1 554.5,278.9 549.0,278.3 539.4,282.5 538.2,288.0 531.6,291.6"/><polyline points="555.1,283.1 550.2,284.9 543.0,292.8 544.2,300.0 545.4,309.0 538.2,311.4"/><polyline points="540.0,317.0 555.0,315.7 562.9,313.9 627.3,313.3 634.6,310.2 640.6,312.0 646.6,320.5 651.5,345.0 668.3,366.8 691.0,365.6 701.7,364.4 715.0,352.4 713.7,340.5 734.0,340.5 736.4,338.0 742.4,339.3 742.4,347.6 767.5,347.6 768.7,364.4 771.0,377.5 767.5,390.0 767.5,404.5 775.9,411.7 782.0,431.0 777.3,432.2 778.6,444.2 787.0,438.2 801.4,440.6 812.3,434.6 824.3,440.6 823.1,459.9 824.3,474.3 821.9,480.4 825.5,487.6 811.1,486.4"/><polyline points="818.3,435.8 824.3,434.6 832.8,438.2 834.0,449.0 846.0,443.0 856.9,440.6 856.9,453.9 873.7,458.7 888.2,461.1 895.4,458.7 899.0,453.9 913.5,467.1 925.5,474.3 930.4,473.1 932.8,480.4 942.4,487.6 944.8,494.8 956.0,493.6"/><polyline points="956.0,377.6 934.6,394.6 938.8,408.1 936.4,418.9 937.6,428.6 932.8,440.6 930.4,453.9 940.0,461.1 956.0,473.1"/><polyline points="956.0,222.0 943.0,231.6 950.0,236.0 951.5,252.0 953.0,283.0"/><polyline points="811.1,486.4 773.7,485.7 773.3,561.0 795.4,580.4 800.2,587.6 811.1,596.0"/><polyline points="525.4,587.5 532.6,583.9 544.7,588.7 560.3,582.0 566.4,582.7 579.6,592.3 589.2,590.0 683.2,591.1 700.0,603.2 730.1,604.4 745.8,608.0 750.6,606.0 761.5,606.8 785.8,602.0 811.1,596.0"/><polyline points="811.1,596.0 831.6,593.6 844.8,593.6 852.0,597.2 871.3,603.3 879.8,601.3 887.0,603.3 890.6,606.1 896.6,603.3 912.3,587.6 932.8,575.5 940.0,574.3 941.2,563.5 947.2,556.3 956.0,553.9"/><polyline points="752.0,615.3 766.5,615.3 808.7,608.0 814.7,616.5 831.6,605.7 838.8,606.9 847.2,602.0 852.0,599.6"/><polyline points="847.2,603.3 873.7,628.6 876.1,638.2 891.2,654.8 901.4,657.6 916.2,667.8 915.3,678.9 920.8,690.0 944.9,695.6 947.7,701.2 950.0,706.0"/><polyline points="950.0,706.0 957.9,705.8 973.7,710.4 983.9,708.9 993.1,709.5 1003.3,712.3"/><polyline points="1034.8,666.9 1031.1,675.2 1028.3,684.5 1003.3,712.3 1002.4,716.0 1008.0,731.7"/><polyline points="798.5,781.8 811.5,781.8 823.6,790.1 843.0,795.7 853.2,794.7 859.7,792.9 865.2,780.8 872.7,769.7 883.8,758.6 891.2,751.2 902.3,734.5 909.7,730.8 926.4,715.1 939.4,713.2 950.0,709.0"/><polyline points="1017.2,819.8 1037.6,820.7"/><polyline points="1020.9,819.8 1018.1,830.9"/><polyline points="975.6,142.0 968.5,151.2 969.5,158.3 963.4,170.5 961.4,185.0"/><polyline points="1083.6,142.0 1066.3,165.5 1066.3,185.0"/><polyline points="1236.3,142.0 1236.3,185.0"/><polyline points="752.0,615.3 750.6,650.0 750.6,701.4 725.3,702.2 725.3,856.9 712.0,859.3 703.6,867.7 697.6,866.5 684.3,868.4 666.3,865.3 663.9,852.0 656.6,849.6 649.4,849.6 644.6,854.5 637.3,860.5"/><polyline points="725.3,768.9 738.6,777.3 745.8,796.6 742.2,811.1 743.4,819.5 753.0,818.3 759.0,817.1 766.3,819.5 769.9,813.5 777.1,812.3 780.0,806.3 789.0,792.0 798.5,781.8"/><polyline points="1008.0,731.7 1016.3,749.3 1019.1,769.7 1017.2,788.3 1020.9,803.1 1020.9,819.8"/><polyline points="1016.3,797.5 1001.5,792.9 996.8,797.5 995.0,805.0 986.6,817.0 996.8,827.2 1004.2,832.7 1015.4,832.7 1018.1,830.9"/><polyline points="897.9,886.8 921.9,864.0 936.3,862.8 955.5,877.2 955.5,885.6 945.9,900.0 929.1,902.5 917.1,910.9 907.5,902.5 901.5,892.8 897.9,886.8"/><polygon points="467.9,142.0 467.9,130.0 1320.0,130.0 1315.8,142.0 1298.5,154.3 1286.2,168.5 1274.0,182.8 1200.0,320.0 1120.0,520.0 1083.6,667.0 1085.6,672.2 1092.8,680.4 1090.7,684.5 1096.9,702.8 1097.9,713.0 1103.0,710.0 1102.0,721.2 1102.0,731.4 1096.9,751.8 1104.0,747.7 1102.0,757.9 1092.8,766.1 1072.4,774.2 1052.0,782.4 1037.7,790.5 1028.5,800.7 1033.6,804.8 1038.7,810.9 1038.7,825.2 1034.6,837.4 1031.6,849.7 1027.5,861.9 1017.3,870.1 1005.1,880.0 996.4,902.5 972.3,931.3 936.3,962.5 907.5,981.7 888.3,988.9 866.6,990.1 859.4,994.9 840.2,998.5 816.2,996.1 792.2,994.9 773.0,998.5 756.1,1003.3 744.1,1005.7 734.5,1010.6 722.5,1015.4 712.9,1014.2 705.7,1008.1 696.1,1001.0 682.9,1001.0 686.5,991.3 682.9,979.3 675.7,972.1 676.9,963.7 681.7,964.9 685.3,960.1 684.0,940.9 681.7,936.0 667.3,912.0 657.6,902.5 651.6,883.2 644.4,866.4 638.4,860.4 619.2,847.2 613.3,837.6 610.8,830.4 607.2,820.7 606.0,811.1 603.6,803.9 602.4,791.8 601.2,782.2 600.0,772.5 595.2,765.3 591.6,755.7 592.8,741.2 591.6,732.8 598.8,731.6 597.6,721.9 591.6,714.7 586.7,707.5 572.3,687.0 566.3,676.1 565.1,670.1 562.7,665.3 561.4,661.7 557.8,656.9 550.0,642.0 542.3,626.0 533.8,618.8 531.4,614.0 526.6,599.6 524.9,587.5 525.4,580.3 527.8,568.2 526.6,558.6 527.8,552.6 533.8,538.1 535.0,534.5 538.6,524.9 542.3,505.6 545.9,494.8 555.5,486.4 554.3,482.7 559.0,477.2 564.0,476.7 571.2,469.5 576.0,452.6 578.9,439.4 574.8,433.4 573.6,428.5 568.8,418.9 561.5,409.3 560.3,399.6 556.3,391.9 564.7,376.3 551.5,345.3 543.0,330.0 540.0,321.0 550.2,318.7 552.7,316.9 547.8,317.5 540.6,315.7 538.2,312.0 535.8,309.0 536.4,306.0 535.2,298.8 531.0,291.6 527.3,286.7 527.3,284.3 525.0,278.3 516.5,271.0 508.0,265.0 506.2,262.0 500.3,256.1 499.7,252.9 489.3,242.5 478.9,233.4 482.8,235.4 487.4,232.1 478.3,232.1 474.4,230.8 473.7,225.6 469.2,221.7 466.6,218.5 472.4,219.8 471.1,217.8 465.3,214.6 466.6,212.0 471.1,210.7 467.9,208.8 467.2,203.6 462.7,206.2 456.9,202.3 452.3,194.5 450.4,188.7 454.9,189.3 459.5,190.0 460.8,186.7 465.3,181.5 466.0,177.6 466.6,166.0 465.3,161.4 471.1,165.3 478.9,166.0 485.4,167.2 477.6,166.6 472.4,164.0 466.6,158.2 466.0,156.2 471.8,154.3 474.4,159.5 475.0,151.7 474.4,145.8"/><polygon points="1314.0,666.6 1307.9,677.9 1302.8,687.0 1297.7,689.0 1296.7,696.2 1291.6,706.4 1292.6,722.7 1300.8,735.0 1305.9,743.1 1302.8,746.2 1302.8,757.4 1308.9,767.6 1311.0,775.7 1321.2,783.9 1336.5,792.0 1353.8,785.9 1374.2,781.8 1388.4,769.6 1392.5,757.4 1402.7,728.8 1401.7,718.6 1421.0,667.7 1430.0,640.0 1320.0,640.0"/></g>
<g clip-path="url(#dk)"><g fill="none" shape-rendering="geometricPrecision" stroke="#151515" stroke-width="1.3"><polyline points="467.9,142.5 493.0,145.0 516.0,142.5 516.5,145.5"/><polyline points="593.0,200.0 591.8,210.8 592.4,216.9 586.4,222.3 585.2,227.7 582.2,231.3 579.2,228.9 574.3,222.9 572.0,224.1 568.9,228.3 563.5,225.9 557.5,227.1 552.7,219.3 549.0,215.7 543.6,213.9 540.6,218.1 541.8,224.1 538.8,228.9 533.4,229.5 531.0,224.7 526.1,227.1 522.5,225.3 520.1,228.3 521.3,236.1 529.8,243.4 530.4,250.6 528.6,255.4 529.8,259.0 528.0,261.4 520.7,254.8 508.0,265.0"/><polyline points="589.8,142.0 580.0,164.7 594.5,185.0 593.0,200.0"/><polyline points="675.4,142.0 676.6,155.0 671.8,173.0 668.0,191.0 650.0,202.4 640.6,214.5 634.6,224.7 637.0,228.9 634.0,243.4 635.8,245.8 634.6,250.6 625.0,267.5 613.5,275.9"/><polyline points="613.5,275.9 609.3,274.7 597.2,286.1 591.2,284.9 589.4,281.9 589.4,277.1 586.4,275.3 576.7,278.9 573.1,284.3 569.5,285.5 566.5,288.0 559.9,282.5 555.1,283.1 554.5,278.9 549.0,278.3 539.4,282.5 538.2,288.0 531.6,291.6"/><polyline points="555.1,283.1 550.2,284.9 543.0,292.8 544.2,300.0 545.4,309.0 538.2,311.4"/><polyline points="540.0,317.0 555.0,315.7 562.9,313.9 627.3,313.3 634.6,310.2 640.6,312.0 646.6,320.5 651.5,345.0 668.3,366.8 691.0,365.6 701.7,364.4 715.0,352.4 713.7,340.5 734.0,340.5 736.4,338.0 742.4,339.3 742.4,347.6 767.5,347.6 768.7,364.4 771.0,377.5 767.5,390.0 767.5,404.5 775.9,411.7 782.0,431.0 777.3,432.2 778.6,444.2 787.0,438.2 801.4,440.6 812.3,434.6 824.3,440.6 823.1,459.9 824.3,474.3 821.9,480.4 825.5,487.6 811.1,486.4"/><polyline points="818.3,435.8 824.3,434.6 832.8,438.2 834.0,449.0 846.0,443.0 856.9,440.6 856.9,453.9 873.7,458.7 888.2,461.1 895.4,458.7 899.0,453.9 913.5,467.1 925.5,474.3 930.4,473.1 932.8,480.4 942.4,487.6 944.8,494.8 956.0,493.6"/><polyline points="956.0,377.6 934.6,394.6 938.8,408.1 936.4,418.9 937.6,428.6 932.8,440.6 930.4,453.9 940.0,461.1 956.0,473.1"/><polyline points="956.0,222.0 943.0,231.6 950.0,236.0 951.5,252.0 953.0,283.0"/><polyline points="811.1,486.4 773.7,485.7 773.3,561.0 795.4,580.4 800.2,587.6 811.1,596.0"/><polyline points="525.4,587.5 532.6,583.9 544.7,588.7 560.3,582.0 566.4,582.7 579.6,592.3 589.2,590.0 683.2,591.1 700.0,603.2 730.1,604.4 745.8,608.0 750.6,606.0 761.5,606.8 785.8,602.0 811.1,596.0"/><polyline points="811.1,596.0 831.6,593.6 844.8,593.6 852.0,597.2 871.3,603.3 879.8,601.3 887.0,603.3 890.6,606.1 896.6,603.3 912.3,587.6 932.8,575.5 940.0,574.3 941.2,563.5 947.2,556.3 956.0,553.9"/><polyline points="752.0,615.3 766.5,615.3 808.7,608.0 814.7,616.5 831.6,605.7 838.8,606.9 847.2,602.0 852.0,599.6"/><polyline points="847.2,603.3 873.7,628.6 876.1,638.2 891.2,654.8 901.4,657.6 916.2,667.8 915.3,678.9 920.8,690.0 944.9,695.6 947.7,701.2 950.0,706.0"/><polyline points="950.0,706.0 957.9,705.8 973.7,710.4 983.9,708.9 993.1,709.5 1003.3,712.3"/><polyline points="1034.8,666.9 1031.1,675.2 1028.3,684.5 1003.3,712.3 1002.4,716.0 1008.0,731.7"/><polyline points="798.5,781.8 811.5,781.8 823.6,790.1 843.0,795.7 853.2,794.7 859.7,792.9 865.2,780.8 872.7,769.7 883.8,758.6 891.2,751.2 902.3,734.5 909.7,730.8 926.4,715.1 939.4,713.2 950.0,709.0"/><polyline points="1017.2,819.8 1037.6,820.7"/><polyline points="1020.9,819.8 1018.1,830.9"/><polyline points="975.6,142.0 968.5,151.2 969.5,158.3 963.4,170.5 961.4,185.0"/><polyline points="1083.6,142.0 1066.3,165.5 1066.3,185.0"/><polyline points="1236.3,142.0 1236.3,185.0"/><polyline points="752.0,615.3 750.6,650.0 750.6,701.4 725.3,702.2 725.3,856.9 712.0,859.3 703.6,867.7 697.6,866.5 684.3,868.4 666.3,865.3 663.9,852.0 656.6,849.6 649.4,849.6 644.6,854.5 637.3,860.5"/><polyline points="725.3,768.9 738.6,777.3 745.8,796.6 742.2,811.1 743.4,819.5 753.0,818.3 759.0,817.1 766.3,819.5 769.9,813.5 777.1,812.3 780.0,806.3 789.0,792.0 798.5,781.8"/><polyline points="1008.0,731.7 1016.3,749.3 1019.1,769.7 1017.2,788.3 1020.9,803.1 1020.9,819.8"/><polyline points="1016.3,797.5 1001.5,792.9 996.8,797.5 995.0,805.0 986.6,817.0 996.8,827.2 1004.2,832.7 1015.4,832.7 1018.1,830.9"/><polyline points="897.9,886.8 921.9,864.0 936.3,862.8 955.5,877.2 955.5,885.6 945.9,900.0 929.1,902.5 917.1,910.9 907.5,902.5 901.5,892.8 897.9,886.8"/><polygon points="467.9,142.0 467.9,130.0 1320.0,130.0 1315.8,142.0 1298.5,154.3 1286.2,168.5 1274.0,182.8 1200.0,320.0 1120.0,520.0 1083.6,667.0 1085.6,672.2 1092.8,680.4 1090.7,684.5 1096.9,702.8 1097.9,713.0 1103.0,710.0 1102.0,721.2 1102.0,731.4 1096.9,751.8 1104.0,747.7 1102.0,757.9 1092.8,766.1 1072.4,774.2 1052.0,782.4 1037.7,790.5 1028.5,800.7 1033.6,804.8 1038.7,810.9 1038.7,825.2 1034.6,837.4 1031.6,849.7 1027.5,861.9 1017.3,870.1 1005.1,880.0 996.4,902.5 972.3,931.3 936.3,962.5 907.5,981.7 888.3,988.9 866.6,990.1 859.4,994.9 840.2,998.5 816.2,996.1 792.2,994.9 773.0,998.5 756.1,1003.3 744.1,1005.7 734.5,1010.6 722.5,1015.4 712.9,1014.2 705.7,1008.1 696.1,1001.0 682.9,1001.0 686.5,991.3 682.9,979.3 675.7,972.1 676.9,963.7 681.7,964.9 685.3,960.1 684.0,940.9 681.7,936.0 667.3,912.0 657.6,902.5 651.6,883.2 644.4,866.4 638.4,860.4 619.2,847.2 613.3,837.6 610.8,830.4 607.2,820.7 606.0,811.1 603.6,803.9 602.4,791.8 601.2,782.2 600.0,772.5 595.2,765.3 591.6,755.7 592.8,741.2 591.6,732.8 598.8,731.6 597.6,721.9 591.6,714.7 586.7,707.5 572.3,687.0 566.3,676.1 565.1,670.1 562.7,665.3 561.4,661.7 557.8,656.9 550.0,642.0 542.3,626.0 533.8,618.8 531.4,614.0 526.6,599.6 524.9,587.5 525.4,580.3 527.8,568.2 526.6,558.6 527.8,552.6 533.8,538.1 535.0,534.5 538.6,524.9 542.3,505.6 545.9,494.8 555.5,486.4 554.3,482.7 559.0,477.2 564.0,476.7 571.2,469.5 576.0,452.6 578.9,439.4 574.8,433.4 573.6,428.5 568.8,418.9 561.5,409.3 560.3,399.6 556.3,391.9 564.7,376.3 551.5,345.3 543.0,330.0 540.0,321.0 550.2,318.7 552.7,316.9 547.8,317.5 540.6,315.7 538.2,312.0 535.8,309.0 536.4,306.0 535.2,298.8 531.0,291.6 527.3,286.7 527.3,284.3 525.0,278.3 516.5,271.0 508.0,265.0 506.2,262.0 500.3,256.1 499.7,252.9 489.3,242.5 478.9,233.4 482.8,235.4 487.4,232.1 478.3,232.1 474.4,230.8 473.7,225.6 469.2,221.7 466.6,218.5 472.4,219.8 471.1,217.8 465.3,214.6 466.6,212.0 471.1,210.7 467.9,208.8 467.2,203.6 462.7,206.2 456.9,202.3 452.3,194.5 450.4,188.7 454.9,189.3 459.5,190.0 460.8,186.7 465.3,181.5 466.0,177.6 466.6,166.0 465.3,161.4 471.1,165.3 478.9,166.0 485.4,167.2 477.6,166.6 472.4,164.0 466.6,158.2 466.0,156.2 471.8,154.3 474.4,159.5 475.0,151.7 474.4,145.8"/><polygon points="1314.0,666.6 1307.9,677.9 1302.8,687.0 1297.7,689.0 1296.7,696.2 1291.6,706.4 1292.6,722.7 1300.8,735.0 1305.9,743.1 1302.8,746.2 1302.8,757.4 1308.9,767.6 1311.0,775.7 1321.2,783.9 1336.5,792.0 1353.8,785.9 1374.2,781.8 1388.4,769.6 1392.5,757.4 1402.7,728.8 1401.7,718.6 1421.0,667.7 1430.0,640.0 1320.0,640.0"/></g></g>
<g shape-rendering="geometricPrecision">
<polygon points="396,162 400,158 404,161 403,169 399,173 395,168" fill="#e0caa8" stroke="#555" stroke-width="0.8"/>
<polygon points="1582.6,683.7 1589.4,679 1598.6,686.5 1595.8,692.3 1591.1,692.9 1583,686" fill="#c6a266" stroke="#111" stroke-width="1"/>
<polygon points="948.0,707.0 952.5,713.0 952.5,734.0 941.5,770.0 917.9,809.7 744.0,1003.0 730.0,1004.5 686.5,994.5" fill="#82931e" stroke="#111" stroke-width="1"/>
<path d="M949.6,700.0 L951.8,705.6 L957.8,705.9 L953.1,709.7 L954.7,715.6 L949.6,712.3 L944.5,715.6 L946.1,709.7 L941.4,705.9 L947.4,705.6ZM951.4,728.7 L953.6,734.3 L959.6,734.6 L954.9,738.4 L956.5,744.3 L951.4,741.0 L946.3,744.3 L947.9,738.4 L943.2,734.6 L949.2,734.3ZM953.3,735.2 L955.5,740.8 L961.5,741.1 L956.8,744.9 L958.4,750.8 L953.3,747.5 L948.2,750.8 L949.8,744.9 L945.1,741.1 L951.1,740.8ZM946.8,744.4 L949.0,750.0 L955.0,750.3 L950.3,754.1 L951.9,760.0 L946.8,756.7 L941.7,760.0 L943.3,754.1 L938.6,750.3 L944.6,750.0ZM944.0,748.2 L946.2,753.8 L952.2,754.1 L947.5,757.9 L949.1,763.8 L944.0,760.5 L938.9,763.8 L940.5,757.9 L935.8,754.1 L941.8,753.8ZM935.7,756.5 L937.9,762.1 L943.9,762.4 L939.2,766.2 L940.8,772.1 L935.7,768.8 L930.6,772.1 L932.2,766.2 L927.5,762.4 L933.5,762.1ZM905.1,759.3 L907.3,764.9 L913.3,765.2 L908.6,769.0 L910.2,774.9 L905.1,771.6 L900.0,774.9 L901.6,769.0 L896.9,765.2 L902.9,764.9ZM908.0,759.4 L910.2,765.0 L916.2,765.3 L911.5,769.1 L913.1,775.0 L908.0,771.7 L902.9,775.0 L904.5,769.1 L899.8,765.3 L905.8,765.0ZM911.6,788.9 L913.8,794.5 L919.8,794.8 L915.1,798.6 L916.7,804.5 L911.6,801.2 L906.5,804.5 L908.1,798.6 L903.4,794.8 L909.4,794.5ZM919.0,788.9 L921.2,794.5 L927.2,794.8 L922.5,798.6 L924.1,804.5 L919.0,801.2 L913.9,804.5 L915.5,798.6 L910.8,794.8 L916.8,794.5ZM926.4,785.2 L928.6,790.8 L934.6,791.1 L929.9,794.9 L931.5,800.8 L926.4,797.5 L921.3,800.8 L922.9,794.9 L918.2,791.1 L924.2,790.8ZM924.6,794.5 L926.8,800.1 L932.8,800.4 L928.1,804.2 L929.7,810.1 L924.6,806.8 L919.5,810.1 L921.1,804.2 L916.4,800.4 L922.4,800.1ZM686.5,985.1 L688.7,990.7 L694.7,991.0 L690.0,994.8 L691.6,1000.7 L686.5,997.4 L681.4,1000.7 L683.0,994.8 L678.3,991.0 L684.3,990.7ZM703.3,977.9 L705.5,983.5 L711.5,983.8 L706.8,987.6 L708.4,993.5 L703.3,990.2 L698.2,993.5 L699.8,987.6 L695.1,983.8 L701.1,983.5ZM708.1,975.5 L710.3,981.1 L716.3,981.4 L711.6,985.2 L713.2,991.1 L708.1,987.8 L703.0,991.1 L704.6,985.2 L699.9,981.4 L705.9,981.1ZM720.1,980.3 L722.3,985.9 L728.3,986.2 L723.6,990.0 L725.2,995.9 L720.1,992.6 L715.0,995.9 L716.6,990.0 L711.9,986.2 L717.9,985.9ZM729.7,980.3 L731.9,985.9 L737.9,986.2 L733.2,990.0 L734.8,995.9 L729.7,992.6 L724.6,995.9 L726.2,990.0 L721.5,986.2 L727.5,985.9ZM746.5,979.1 L748.7,984.7 L754.7,985.0 L750.0,988.8 L751.6,994.7 L746.5,991.4 L741.4,994.7 L743.0,988.8 L738.3,985.0 L744.3,984.7ZM736.9,997.1 L739.1,1002.7 L745.1,1003.0 L740.4,1006.8 L742.0,1012.7 L736.9,1009.4 L731.8,1012.7 L733.4,1006.8 L728.7,1003.0 L734.7,1002.7ZM735.0,993.4 L737.2,999.0 L743.2,999.3 L738.5,1003.1 L740.1,1009.0 L735.0,1005.7 L729.9,1009.0 L731.5,1003.1 L726.8,999.3 L732.8,999.0Z" fill="#e2d46c" stroke="#111" stroke-width="1.25"/>
</g>
</g></svg>
<div class="r" style="left:309px;top:142px;width:1px;height:903px;background:#b0b0b0"></div>
<div class="r" style="left:1624px;top:142px;width:1px;height:903px;background:#c8c8c8"></div>
<div class="r" style="left:309px;top:1045px;width:1316px;height:1px;background:#b8b8b8"></div>
<div class="r" style="left:0px;top:142px;width:309px;height:904px;background:#ededed"></div>
<svg class="r" style="left:3px;top:145px" width="6" height="6" viewBox="0 0 6 6"><path d="M1 1v4M4 1v4" stroke="#aaa"/></svg>
<div class="t" style="left:11.6px;top:146.0px;font-size:14.5px;color:#2e3436;">Layers</div>
<div class="r" style="left:272px;top:148px;width:12px;height:12px;border:1px solid #666;border-radius:2px"></div><svg class="r" style="left:274px;top:150px" width="8" height="8" viewBox="0 0 8 8"><rect x="2.5" y="0.5" width="5" height="5" rx="1" fill="none" stroke="#555"/><rect x="0.5" y="2.5" width="5" height="5" rx="1" fill="#ededed" stroke="#555"/></svg><div class="r" style="left:289px;top:148px;width:12px;height:12px;border:1px solid #666;border-radius:2px"></div><svg class="r" style="left:291px;top:150px" width="8" height="8" viewBox="0 0 8 8"><path d="M1 1l6 6M7 1l-6 6" stroke="#555" stroke-width="2"/></svg>
<div class="r" style="left:9px;top:166px;width:294px;height:847px;background:#fafafa;border:1px solid #bdbdbd"></div>
<svg class="r" style="left:18px;top:176.1px" width="9" height="9" viewBox="0 0 9 9"><path d="M1 2h7l-3.5 6z" fill="#555"/></svg>
<svg class="r" style="left:36px;top:172px" width="15" height="15" viewBox="0 0 15 15"><defs><linearGradient id="cbg" x1="0" y1="0" x2="0" y2="1"><stop offset="0" stop-color="#d8d8d8"/><stop offset="1" stop-color="#bcbcbc"/></linearGradient></defs><rect x="0.5" y="0.5" width="13" height="13" rx="2" fill="url(#cbg)" stroke="#7a7a7a"/><path d="M3 7l3 3.5 7-9" fill="none" stroke="#222" stroke-width="2"/></svg>
<div class="t" style="left:80.3px;top:172.0px;font-size:14.5px;color:#2e3436;font-weight:bold;">geotagged_photos</div>
<svg class="r" style="left:18px;top:215.6px" width="9" height="9" viewBox="0 0 9 9"><path d="M1 2h7l-3.5 6z" fill="#555"/></svg>
<svg class="r" style="left:36px;top:213px" width="15" height="15" viewBox="0 0 15 15"><defs><linearGradient id="cbg" x1="0" y1="0" x2="0" y2="1"><stop offset="0" stop-color="#d8d8d8"/><stop offset="1" stop-color="#bcbcbc"/></linearGradient></defs><rect x="0.5" y="0.5" width="13" height="13" rx="2" fill="url(#cbg)" stroke="#7a7a7a"/><path d="M3 7l3 3.5 7-9" fill="none" stroke="#222" stroke-width="2"/></svg>
<div class="t" style="left:80.3px;top:211.5px;font-size:14.5px;color:#2e3436;font-weight:bold;">OUTPUT.shp</div>
<svg class="r" style="left:18px;top:256.7px" width="9" height="9" viewBox="0 0 9 9"><path d="M2 1v7l6-3.5z" fill="#555"/></svg>
<svg class="r" style="left:36px;top:254px" width="15" height="15" viewBox="0 0 15 15"><defs><linearGradient id="cbg" x1="0" y1="0" x2="0" y2="1"><stop offset="0" stop-color="#d8d8d8"/><stop offset="1" stop-color="#bcbcbc"/></linearGradient></defs><rect x="0.5" y="0.5" width="13" height="13" rx="2" fill="url(#cbg)" stroke="#7a7a7a"/><path d="M3 7l3 3.5 7-9" fill="none" stroke="#222" stroke-width="2"/></svg>
<div class="t" style="left:80.3px;top:252.6px;font-size:14.5px;color:#2e3436;font-weight:bold;">nat</div>
<svg class="r" style="left:18px;top:279.6px" width="9" height="9" viewBox="0 0 9 9"><path d="M1 2h7l-3.5 6z" fill="#555"/></svg>
<svg class="r" style="left:36px;top:277px" width="15" height="15" viewBox="0 0 15 15"><defs><linearGradient id="cbg" x1="0" y1="0" x2="0" y2="1"><stop offset="0" stop-color="#d8d8d8"/><stop offset="1" stop-color="#bcbcbc"/></linearGradient></defs><rect x="0.5" y="0.5" width="13" height="13" rx="2" fill="url(#cbg)" stroke="#7a7a7a"/><path d="M3 7l3 3.5 7-9" fill="none" stroke="#222" stroke-width="2"/></svg>
<div class="t" style="left:80.3px;top:275.5px;font-size:14.5px;color:#2e3436;font-weight:bold;">World_countries_shp</div>
<svg class="r" style="left:57px;top:172px" width="18" height="14" viewBox="0 0 18 14"><circle cx="4" cy="12" r="1.4" fill="none" stroke="#777" stroke-width="0.7"/><circle cx="7" cy="5" r="1.4" fill="none" stroke="#777" stroke-width="0.7"/><circle cx="14" cy="2" r="1.4" fill="none" stroke="#777" stroke-width="0.7"/></svg>
<svg class="r" style="left:57px;top:213px" width="18" height="14" viewBox="0 0 18 14"><path d="M2 4c3-3 5 0 7-1s5-2 7 0 1 6 0 7-4-2-7 0-6 3-7 1 0-5 0-7z" fill="#ececec" stroke="#999" stroke-width="0.9"/></svg>
<svg class="r" style="left:57px;top:277px" width="18" height="14" viewBox="0 0 18 14"><path d="M2 4c3-3 5 0 7-1s5-2 7 0 1 6 0 7-4-2-7 0-6 3-7 1 0-5 0-7z" fill="#ececec" stroke="#999" stroke-width="0.9"/></svg>
<svg class="r" style="left:58px;top:253px" width="15" height="15" viewBox="0 0 15 15"><rect x="0" y="0" width="15" height="15" fill="#e8e8e8"/><rect x="0" y="0" width="5" height="5" fill="#aaa"/><rect x="10" y="0" width="5" height="5" fill="#aaa"/><rect x="5" y="5" width="5" height="5" fill="#bbb"/><rect x="0" y="10" width="10" height="5" fill="#b0b0b0"/><rect x="5" y="10" width="5" height="5" fill="#c8c8c8"/></svg>
<div class="r" style="left:80px;top:291px;width:150px;height:1px;background:#2e3436"></div>
<svg class="r" style="left:53px;top:190px" width="16" height="16" viewBox="0 0 16 16"><path d="M8 1l2 5h5l-4 3.5 1.5 5.5L8 12l-4.5 3 1.5-5.5L1 6h5z" fill="#d8cc5c" stroke="#111" stroke-width="1"/></svg>
<div class="r" style="left:53px;top:232px;width:15px;height:15px;background:#7f941c;border:1px solid #333"></div>
<div class="r" style="left:53px;top:296px;width:15px;height:15px;background:#e4cfaa;border:1px solid #888"></div>
<div class="r" style="left:9px;top:1013px;width:57px;height:33px;background:#fff;border:1px solid #bdbdbd;border-top:none;border-radius:0 0 3px 3px"></div>
<div class="r" style="left:9px;top:1011px;width:294px;height:2px;background:#b9b9b9"></div>
<div class="r" style="left:66px;top:1013px;width:72px;height:29px;background:linear-gradient(#d6d6d6,#f4f4f4);border:1px solid #c4c4c4;border-top:none;border-radius:0 0 3px 3px"></div>
<div class="t" style="left:16.7px;top:1020.8px;font-size:14.5px;color:#2e3436;">Layers</div>
<div class="t" style="left:74.0px;top:1019.7px;font-size:14.5px;color:#2e3436;">Browser</div>
<div class="r" style="left:1625px;top:142px;width:290px;height:904px;background:#ededed"></div>
<div class="r" style="left:1625px;top:142px;width:1px;height:904px;background:#d8d8d8"></div>
<div class="t" style="left:1633.4px;top:145.6px;font-size:14.5px;color:#2e3436;">Processing Toolbox</div>
<div class="r" style="left:1886px;top:148px;width:12px;height:12px;border:1px solid #666;border-radius:2px"></div><svg class="r" style="left:1888px;top:150px" width="8" height="8" viewBox="0 0 8 8"><rect x="2.5" y="0.5" width="5" height="5" rx="1" fill="none" stroke="#555"/><rect x="0.5" y="2.5" width="5" height="5" rx="1" fill="#ededed" stroke="#555"/></svg><div class="r" style="left:1903px;top:148px;width:12px;height:12px;border:1px solid #666;border-radius:2px"></div><svg class="r" style="left:1905px;top:150px" width="8" height="8" viewBox="0 0 8 8"><path d="M1 1l6 6M7 1l-6 6" stroke="#555" stroke-width="2"/></svg>
<div class="r" style="left:1632px;top:167px;width:283px;height:25px;background:#fafafa;border:1px solid #a8a8a8;border-radius:3px"></div>
<div class="t" style="left:1636.5px;top:171.9px;font-size:14.5px;color:#9a9a9a;">Search...</div>
<div class="r" style="left:1631px;top:195px;width:284px;height:818px;background:#fafafa;border:1px solid #bdbdbd;border-right:none"></div>
<div class="r" style="left:1903px;top:196px;width:12px;height:816px;background:#f0f0f0"></div>
<div class="r" style="left:1904px;top:207px;width:12px;height:616px;background:linear-gradient(90deg,#ececec,#d0d0d0);border:1px solid #a8a8a8;border-radius:6px"></div>
<svg class="r" style="left:1906px;top:199px" width="6" height="5" viewBox="0 0 6 5"><path d="M0 5h6l-3-4z" fill="#aaa"/></svg>
<svg class="r" style="left:1906px;top:1003px" width="6" height="5" viewBox="0 0 6 5"><path d="M0 0h6l-3 4z" fill="#555"/></svg>
<div class="r" style="left:1632px;top:749px;width:271px;height:22px;background:linear-gradient(#4a8ae0,#3676d0)"></div>
<div class="r" style="left:1631px;top:195px;width:272px;height:817px;overflow:hidden">
<svg class="r" style="left:9px;top:9px" width="9" height="9" viewBox="0 0 9 9"><path d="M1 2h7l-3.5 6z" fill="#555"/></svg><div class="t" style="left:24.0px;top:5.3px;font-size:14.5px;color:#2e3436;">Recently used algorithms</div><svg class="r" style="left:44px;top:30px" width="16" height="14" viewBox="0 0 16 14"><rect x="0" y="0" width="16" height="14" fill="#b8d8f0"/><rect x="0" y="8" width="16" height="6" fill="#2a4a68"/><path d="M3 9c0-8 9-8 9 0" fill="none" stroke="#111" stroke-width="1.3"/><circle cx="3" cy="9" r="1.5" fill="#e88"/></svg><div class="t" style="left:66.3px;top:28.7px;font-size:14.5px;color:#2e3436;">sieve</div><svg class="r" style="left:45px;top:53px" width="14" height="14" viewBox="0 0 14 14"><path d="M13.44,5.56 L13.44,8.44 L11.59,8.73 L11.45,9.04 L12.57,10.54 L10.54,12.57 L9.02,11.46 L8.71,11.59 L8.44,13.44 L5.56,13.44 L5.27,11.59 L4.96,11.45 L3.46,12.57 L1.43,10.54 L2.54,9.02 L2.41,8.71 L0.56,8.44 L0.56,5.56 L2.41,5.27 L2.55,4.96 L1.43,3.46 L3.46,1.43 L4.98,2.54 L5.29,2.41 L5.56,0.56 L8.44,0.56 L8.73,2.41 L9.04,2.55 L10.54,1.43 L12.57,3.46 L11.46,4.98 L11.59,5.29Z" fill="#3a70c8"/><circle cx="7" cy="7" r="3.2" fill="#dce8f8"/><circle cx="7" cy="7" r="1.6" fill="#3a70c8" opacity="0.5"/></svg><div class="t" style="left:66.3px;top:51.5px;font-size:14.5px;color:#2e3436;">Nearest neighbour analysis</div><svg class="r" style="left:45px;top:76px" width="14" height="14" viewBox="0 0 14 14"><path d="M13.44,5.56 L13.44,8.44 L11.59,8.73 L11.45,9.04 L12.57,10.54 L10.54,12.57 L9.02,11.46 L8.71,11.59 L8.44,13.44 L5.56,13.44 L5.27,11.59 L4.96,11.45 L3.46,12.57 L1.43,10.54 L2.54,9.02 L2.41,8.71 L0.56,8.44 L0.56,5.56 L2.41,5.27 L2.55,4.96 L1.43,3.46 L3.46,1.43 L4.98,2.54 L5.29,2.41 L5.56,0.56 L8.44,0.56 L8.73,2.41 L9.04,2.55 L10.54,1.43 L12.57,3.46 L11.46,4.98 L11.59,5.29Z" fill="#3a70c8"/><circle cx="7" cy="7" r="3.2" fill="#dce8f8"/><circle cx="7" cy="7" r="1.6" fill="#3a70c8" opacity="0.5"/></svg><div class="t" style="left:66.3px;top:74.2px;font-size:14.5px;color:#2e3436;">Convex hull</div><svg class="r" style="left:9px;top:101px" width="9" height="9" viewBox="0 0 9 9"><path d="M1 2h7l-3.5 6z" fill="#555"/></svg><svg class="r" style="left:25px;top:96px" width="17" height="17" viewBox="0 0 17 17"><circle cx="9" cy="10" r="6" fill="#5aa0d0"/><path d="M6 9l3 2 3-3" stroke="#3a9a3a" stroke-width="2" fill="none"/><rect x="1" y="11" width="15" height="5" rx="2" fill="#111"/><path d="M4 1l3 7M2 4h6" stroke="#111" stroke-width="1.5"/></svg><div class="t" style="left:46.6px;top:97.0px;font-size:14.5px;color:#2e3436;">GDAL/OGR [15 geoalgorithms]</div><svg class="r" style="left:29px;top:124px" width="9" height="9" viewBox="0 0 9 9"><path d="M1 2h7l-3.5 6z" fill="#555"/></svg><div class="t" style="left:44.0px;top:119.7px;font-size:14.5px;color:#2e3436;">[GDAL] Analysis</div><div class="t" style="left:64.0px;top:142.7px;font-size:14.5px;color:#2e3436;">fillnodata</div><svg class="r" style="left:64px;top:166px" width="16" height="16" viewBox="0 0 16 16"><rect x="0" y="0" width="4" height="16" fill="#111"/><rect x="0" y="8" width="4" height="8" fill="#999"/><rect x="11" y="0" width="4" height="16" fill="#111"/><path d="M5 7h5M8 5l2 2-2 2" stroke="#4a8ac8" stroke-width="1.2" fill="none"/></svg><div class="t" style="left:86.0px;top:165.7px;font-size:14.5px;color:#2e3436;">Nearblack</div><svg class="r" style="left:64px;top:189px" width="16" height="16" viewBox="0 0 16 16"><rect x="0" y="0" width="16" height="16" fill="#90c890"/><path d="M0 10L10 0h6v3L3 16H0z" fill="#c0e4c0"/><path d="M3 2h4l3 6 4 2v4H9L6 8z" fill="#e4e4e4" stroke="#888" stroke-width="0.8"/></svg><div class="t" style="left:86.0px;top:188.7px;font-size:14.5px;color:#2e3436;">proximity</div><svg class="r" style="left:64px;top:213px" width="16" height="14" viewBox="0 0 16 14"><rect x="0" y="0" width="16" height="14" fill="#b8d8f0"/><rect x="0" y="8" width="16" height="6" fill="#2a4a68"/><path d="M3 9c0-8 9-8 9 0" fill="none" stroke="#111" stroke-width="1.3"/><circle cx="3" cy="9" r="1.5" fill="#e88"/></svg><div class="t" style="left:86.0px;top:211.7px;font-size:14.5px;color:#2e3436;">sieve</div><svg class="r" style="left:29px;top:239px" width="9" height="9" viewBox="0 0 9 9"><path d="M2 1v7l6-3.5z" fill="#555"/></svg><div class="t" style="left:44.0px;top:234.7px;font-size:14.5px;color:#2e3436;">[GDAL] Conversion</div><svg class="r" style="left:29px;top:262px" width="9" height="9" viewBox="0 0 9 9"><path d="M2 1v7l6-3.5z" fill="#555"/></svg><div class="t" style="left:44.0px;top:257.7px;font-size:14.5px;color:#2e3436;">[GDAL] Miscellaneous</div><svg class="r" style="left:29px;top:285px" width="9" height="9" viewBox="0 0 9 9"><path d="M2 1v7l6-3.5z" fill="#555"/></svg><div class="t" style="left:44.0px;top:280.7px;font-size:14.5px;color:#2e3436;">[GDAL] Projections</div><svg class="r" style="left:29px;top:308px" width="9" height="9" viewBox="0 0 9 9"><path d="M2 1v7l6-3.5z" fill="#555"/></svg><div class="t" style="left:44.0px;top:303.7px;font-size:14.5px;color:#2e3436;">[OGR] Miscellaneous</div><svg class="r" style="left:29px;top:331px" width="9" height="9" viewBox="0 0 9 9"><path d="M2 1v7l6-3.5z" fill="#555"/></svg><div class="t" style="left:44.0px;top:326.7px;font-size:14.5px;color:#2e3436;">[OGR] Transformation</div><svg class="r" style="left:9px;top:354px" width="9" height="9" viewBox="0 0 9 9"><path d="M2 1v7l6-3.5z" fill="#555"/></svg><svg class="r" style="left:25px;top:350px" width="14" height="16" viewBox="0 0 14 16"><rect x="1" y="2" width="12" height="12" fill="#ccc" stroke="#777"/><ellipse cx="7" cy="2.5" rx="6" ry="2" fill="#e4e4e4" stroke="#777"/><path d="M1 6c2 2 10 2 12 0M1 10c2 2 10 2 12 0" stroke="#888" fill="none"/></svg><div class="t" style="left:46.0px;top:349.7px;font-size:14.5px;color:#2e3436;">GeoServer/PostGIS tools [8 geo...</div><svg class="r" style="left:9px;top:377px" width="9" height="9" viewBox="0 0 9 9"><path d="M2 1v7l6-3.5z" fill="#555"/></svg><svg class="r" style="left:24px;top:373px" width="16" height="16" viewBox="0 0 16 16"><circle cx="11" cy="4" r="3.3" fill="#3a70d0"/><circle cx="12" cy="12" r="3.5" fill="#e02020"/><circle cx="4" cy="10" r="3" fill="#555"/><path d="M4 10l7-6M4 10l8 2" stroke="#333" stroke-width="1.4"/></svg><div class="t" style="left:46.0px;top:372.7px;font-size:14.5px;color:#2e3436;">Models [4 geoalgorithms]</div><svg class="r" style="left:9px;top:400px" width="9" height="9" viewBox="0 0 9 9"><path d="M1 2h7l-3.5 6z" fill="#555"/></svg><svg class="r" style="left:24px;top:396px" width="16" height="16" viewBox="0 0 16 16"><path d="M3 14c0-6 4-11 11-12-2 6-5 11-11 12z" fill="#a8c840" stroke="#587010" stroke-width="1"/><path d="M5 4c1 3 3 7 6 10" stroke="#e8d040" stroke-width="2.2" fill="none"/></svg><div class="t" style="left:46.0px;top:395.7px;font-size:14.5px;color:#2e3436;">QGIS geoalgorithms [58 geoalg...</div><svg class="r" style="left:29px;top:423px" width="9" height="9" viewBox="0 0 9 9"><path d="M2 1v7l6-3.5z" fill="#555"/></svg><div class="t" style="left:44.0px;top:418.7px;font-size:14.5px;color:#2e3436;">Raster tools</div><svg class="r" style="left:29px;top:446px" width="9" height="9" viewBox="0 0 9 9"><path d="M2 1v7l6-3.5z" fill="#555"/></svg><div class="t" style="left:44.0px;top:441.7px;font-size:14.5px;color:#2e3436;">Vector analysis tools</div><svg class="r" style="left:29px;top:469px" width="9" height="9" viewBox="0 0 9 9"><path d="M2 1v7l6-3.5z" fill="#555"/></svg><div class="t" style="left:44.0px;top:464.7px;font-size:14.5px;color:#2e3436;">Vector creation tools</div><svg class="r" style="left:29px;top:492px" width="9" height="9" viewBox="0 0 9 9"><path d="M2 1v7l6-3.5z" fill="#555"/></svg><div class="t" style="left:44.0px;top:487.7px;font-size:14.5px;color:#2e3436;">Vector general tools</div><svg class="r" style="left:29px;top:515px" width="9" height="9" viewBox="0 0 9 9"><path d="M1 2h7l-3.5 6z" fill="#555"/></svg><div class="t" style="left:44.0px;top:510.7px;font-size:14.5px;color:#2e3436;">Vector geometry tools</div><svg class="r" style="left:65px;top:535px" width="14" height="14" viewBox="0 0 14 14"><path d="M13.44,5.56 L13.44,8.44 L11.59,8.73 L11.45,9.04 L12.57,10.54 L10.54,12.57 L9.02,11.46 L8.71,11.59 L8.44,13.44 L5.56,13.44 L5.27,11.59 L4.96,11.45 L3.46,12.57 L1.43,10.54 L2.54,9.02 L2.41,8.71 L0.56,8.44 L0.56,5.56 L2.41,5.27 L2.55,4.96 L1.43,3.46 L3.46,1.43 L4.98,2.54 L5.29,2.41 L5.56,0.56 L8.44,0.56 L8.73,2.41 L9.04,2.55 L10.54,1.43 L12.57,3.46 L11.46,4.98 L11.59,5.29Z" fill="#3a70c8"/><circle cx="7" cy="7" r="3.2" fill="#dce8f8"/><circle cx="7" cy="7" r="1.6" fill="#3a70c8" opacity="0.5"/></svg><div class="t" style="left:86.0px;top:533.7px;font-size:14.5px;color:#2e3436;">Convert geometry type</div><svg class="r" style="left:65px;top:558px" width="14" height="14" viewBox="0 0 14 14"><path d="M13.44,5.56 L13.44,8.44 L11.59,8.73 L11.45,9.04 L12.57,10.54 L10.54,12.57 L9.02,11.46 L8.71,11.59 L8.44,13.44 L5.56,13.44 L5.27,11.59 L4.96,11.45 L3.46,12.57 L1.43,10.54 L2.54,9.02 L2.41,8.71 L0.56,8.44 L0.56,5.56 L2.41,5.27 L2.55,4.96 L1.43,3.46 L3.46,1.43 L4.98,2.54 L5.29,2.41 L5.56,0.56 L8.44,0.56 L8.73,2.41 L9.04,2.55 L10.54,1.43 L12.57,3.46 L11.46,4.98 L11.59,5.29Z" fill="#c8dcf8"/><circle cx="7" cy="7" r="3.2" fill="#dce8f8"/><circle cx="7" cy="7" r="1.6" fill="#c8dcf8" opacity="0.5"/></svg><div class="t" style="left:86.0px;top:556.7px;font-size:14.5px;color:#ffffff;">Convex hull</div><svg class="r" style="left:65px;top:581px" width="14" height="14" viewBox="0 0 14 14"><path d="M13.44,5.56 L13.44,8.44 L11.59,8.73 L11.45,9.04 L12.57,10.54 L10.54,12.57 L9.02,11.46 L8.71,11.59 L8.44,13.44 L5.56,13.44 L5.27,11.59 L4.96,11.45 L3.46,12.57 L1.43,10.54 L2.54,9.02 L2.41,8.71 L0.56,8.44 L0.56,5.56 L2.41,5.27 L2.55,4.96 L1.43,3.46 L3.46,1.43 L4.98,2.54 L5.29,2.41 L5.56,0.56 L8.44,0.56 L8.73,2.41 L9.04,2.55 L10.54,1.43 L12.57,3.46 L11.46,4.98 L11.59,5.29Z" fill="#3a70c8"/><circle cx="7" cy="7" r="3.2" fill="#dce8f8"/><circle cx="7" cy="7" r="1.6" fill="#3a70c8" opacity="0.5"/></svg><div class="t" style="left:86.0px;top:579.7px;font-size:14.5px;color:#2e3436;">Delaunay triangulation</div><svg class="r" style="left:65px;top:604px" width="14" height="14" viewBox="0 0 14 14"><path d="M13.44,5.56 L13.44,8.44 L11.59,8.73 L11.45,9.04 L12.57,10.54 L10.54,12.57 L9.02,11.46 L8.71,11.59 L8.44,13.44 L5.56,13.44 L5.27,11.59 L4.96,11.45 L3.46,12.57 L1.43,10.54 L2.54,9.02 L2.41,8.71 L0.56,8.44 L0.56,5.56 L2.41,5.27 L2.55,4.96 L1.43,3.46 L3.46,1.43 L4.98,2.54 L5.29,2.41 L5.56,0.56 L8.44,0.56 L8.73,2.41 L9.04,2.55 L10.54,1.43 L12.57,3.46 L11.46,4.98 L11.59,5.29Z" fill="#3a70c8"/><circle cx="7" cy="7" r="3.2" fill="#dce8f8"/><circle cx="7" cy="7" r="1.6" fill="#3a70c8" opacity="0.5"/></svg><div class="t" style="left:86.0px;top:602.7px;font-size:14.5px;color:#2e3436;">Densify geometries</div><svg class="r" style="left:65px;top:627px" width="14" height="14" viewBox="0 0 14 14"><path d="M13.44,5.56 L13.44,8.44 L11.59,8.73 L11.45,9.04 L12.57,10.54 L10.54,12.57 L9.02,11.46 L8.71,11.59 L8.44,13.44 L5.56,13.44 L5.27,11.59 L4.96,11.45 L3.46,12.57 L1.43,10.54 L2.54,9.02 L2.41,8.71 L0.56,8.44 L0.56,5.56 L2.41,5.27 L2.55,4.96 L1.43,3.46 L3.46,1.43 L4.98,2.54 L5.29,2.41 L5.56,0.56 L8.44,0.56 L8.73,2.41 L9.04,2.55 L10.54,1.43 L12.57,3.46 L11.46,4.98 L11.59,5.29Z" fill="#3a70c8"/><circle cx="7" cy="7" r="3.2" fill="#dce8f8"/><circle cx="7" cy="7" r="1.6" fill="#3a70c8" opacity="0.5"/></svg><div class="t" style="left:86.0px;top:625.7px;font-size:14.5px;color:#2e3436;">Densify geometries given ...</div><svg class="r" style="left:65px;top:650px" width="14" height="14" viewBox="0 0 14 14"><path d="M13.44,5.56 L13.44,8.44 L11.59,8.73 L11.45,9.04 L12.57,10.54 L10.54,12.57 L9.02,11.46 L8.71,11.59 L8.44,13.44 L5.56,13.44 L5.27,11.59 L4.96,11.45 L3.46,12.57 L1.43,10.54 L2.54,9.02 L2.41,8.71 L0.56,8.44 L0.56,5.56 L2.41,5.27 L2.55,4.96 L1.43,3.46 L3.46,1.43 L4.98,2.54 L5.29,2.41 L5.56,0.56 L8.44,0.56 L8.73,2.41 L9.04,2.55 L10.54,1.43 L12.57,3.46 L11.46,4.98 L11.59,5.29Z" fill="#3a70c8"/><circle cx="7" cy="7" r="3.2" fill="#dce8f8"/><circle cx="7" cy="7" r="1.6" fill="#3a70c8" opacity="0.5"/></svg><div class="t" style="left:86.0px;top:648.7px;font-size:14.5px;color:#2e3436;">Dissolve</div><svg class="r" style="left:65px;top:673px" width="14" height="14" viewBox="0 0 14 14"><path d="M13.44,5.56 L13.44,8.44 L11.59,8.73 L11.45,9.04 L12.57,10.54 L10.54,12.57 L9.02,11.46 L8.71,11.59 L8.44,13.44 L5.56,13.44 L5.27,11.59 L4.96,11.45 L3.46,12.57 L1.43,10.54 L2.54,9.02 L2.41,8.71 L0.56,8.44 L0.56,5.56 L2.41,5.27 L2.55,4.96 L1.43,3.46 L3.46,1.43 L4.98,2.54 L5.29,2.41 L5.56,0.56 L8.44,0.56 L8.73,2.41 L9.04,2.55 L10.54,1.43 L12.57,3.46 L11.46,4.98 L11.59,5.29Z" fill="#3a70c8"/><circle cx="7" cy="7" r="3.2" fill="#dce8f8"/><circle cx="7" cy="7" r="1.6" fill="#3a70c8" opacity="0.5"/></svg><div class="t" style="left:86.0px;top:671.7px;font-size:14.5px;color:#2e3436;">Explode lines</div><svg class="r" style="left:65px;top:696px" width="14" height="14" viewBox="0 0 14 14"><path d="M13.44,5.56 L13.44,8.44 L11.59,8.73 L11.45,9.04 L12.57,10.54 L10.54,12.57 L9.02,11.46 L8.71,11.59 L8.44,13.44 L5.56,13.44 L5.27,11.59 L4.96,11.45 L3.46,12.57 L1.43,10.54 L2.54,9.02 L2.41,8.71 L0.56,8.44 L0.56,5.56 L2.41,5.27 L2.55,4.96 L1.43,3.46 L3.46,1.43 L4.98,2.54 L5.29,2.41 L5.56,0.56 L8.44,0.56 L8.73,2.41 L9.04,2.55 L10.54,1.43 L12.57,3.46 L11.46,4.98 L11.59,5.29Z" fill="#3a70c8"/><circle cx="7" cy="7" r="3.2" fill="#dce8f8"/><circle cx="7" cy="7" r="1.6" fill="#3a70c8" opacity="0.5"/></svg><div class="t" style="left:86.0px;top:694.7px;font-size:14.5px;color:#2e3436;">Extract nodes</div><svg class="r" style="left:65px;top:719px" width="14" height="14" viewBox="0 0 14 14"><path d="M13.44,5.56 L13.44,8.44 L11.59,8.73 L11.45,9.04 L12.57,10.54 L10.54,12.57 L9.02,11.46 L8.71,11.59 L8.44,13.44 L5.56,13.44 L5.27,11.59 L4.96,11.45 L3.46,12.57 L1.43,10.54 L2.54,9.02 L2.41,8.71 L0.56,8.44 L0.56,5.56 L2.41,5.27 L2.55,4.96 L1.43,3.46 L3.46,1.43 L4.98,2.54 L5.29,2.41 L5.56,0.56 L8.44,0.56 L8.73,2.41 L9.04,2.55 L10.54,1.43 L12.57,3.46 L11.46,4.98 L11.59,5.29Z" fill="#3a70c8"/><circle cx="7" cy="7" r="3.2" fill="#dce8f8"/><circle cx="7" cy="7" r="1.6" fill="#3a70c8" opacity="0.5"/></svg><div class="t" style="left:86.0px;top:717.7px;font-size:14.5px;color:#2e3436;">Fixed distance buffer</div><svg class="r" style="left:65px;top:742px" width="14" height="14" viewBox="0 0 14 14"><path d="M13.44,5.56 L13.44,8.44 L11.59,8.73 L11.45,9.04 L12.57,10.54 L10.54,12.57 L9.02,11.46 L8.71,11.59 L8.44,13.44 L5.56,13.44 L5.27,11.59 L4.96,11.45 L3.46,12.57 L1.43,10.54 L2.54,9.02 L2.41,8.71 L0.56,8.44 L0.56,5.56 L2.41,5.27 L2.55,4.96 L1.43,3.46 L3.46,1.43 L4.98,2.54 L5.29,2.41 L5.56,0.56 L8.44,0.56 L8.73,2.41 L9.04,2.55 L10.54,1.43 L12.57,3.46 L11.46,4.98 L11.59,5.29Z" fill="#3a70c8"/><circle cx="7" cy="7" r="3.2" fill="#dce8f8"/><circle cx="7" cy="7" r="1.6" fill="#3a70c8" opacity="0.5"/></svg><div class="t" style="left:86.0px;top:740.7px;font-size:14.5px;color:#2e3436;">Lines to polygons</div><svg class="r" style="left:65px;top:765px" width="14" height="14" viewBox="0 0 14 14"><path d="M13.44,5.56 L13.44,8.44 L11.59,8.73 L11.45,9.04 L12.57,10.54 L10.54,12.57 L9.02,11.46 L8.71,11.59 L8.44,13.44 L5.56,13.44 L5.27,11.59 L4.96,11.45 L3.46,12.57 L1.43,10.54 L2.54,9.02 L2.41,8.71 L0.56,8.44 L0.56,5.56 L2.41,5.27 L2.55,4.96 L1.43,3.46 L3.46,1.43 L4.98,2.54 L5.29,2.41 L5.56,0.56 L8.44,0.56 L8.73,2.41 L9.04,2.55 L10.54,1.43 L12.57,3.46 L11.46,4.98 L11.59,5.29Z" fill="#3a70c8"/><circle cx="7" cy="7" r="3.2" fill="#dce8f8"/><circle cx="7" cy="7" r="1.6" fill="#3a70c8" opacity="0.5"/></svg><div class="t" style="left:86.0px;top:763.7px;font-size:14.5px;color:#2e3436;">Multipart to singleparts</div><svg class="r" style="left:65px;top:788px" width="14" height="14" viewBox="0 0 14 14"><path d="M13.44,5.56 L13.44,8.44 L11.59,8.73 L11.45,9.04 L12.57,10.54 L10.54,12.57 L9.02,11.46 L8.71,11.59 L8.44,13.44 L5.56,13.44 L5.27,11.59 L4.96,11.45 L3.46,12.57 L1.43,10.54 L2.54,9.02 L2.41,8.71 L0.56,8.44 L0.56,5.56 L2.41,5.27 L2.55,4.96 L1.43,3.46 L3.46,1.43 L4.98,2.54 L5.29,2.41 L5.56,0.56 L8.44,0.56 L8.73,2.41 L9.04,2.55 L10.54,1.43 L12.57,3.46 L11.46,4.98 L11.59,5.29Z" fill="#3a70c8"/><circle cx="7" cy="7" r="3.2" fill="#dce8f8"/><circle cx="7" cy="7" r="1.6" fill="#3a70c8" opacity="0.5"/></svg><div class="t" style="left:86.0px;top:786.7px;font-size:14.5px;color:#2e3436;">Polygon centroids</div><svg class="r" style="left:65px;top:811px" width="14" height="14" viewBox="0 0 14 14"><path d="M13.44,5.56 L13.44,8.44 L11.59,8.73 L11.45,9.04 L12.57,10.54 L10.54,12.57 L9.02,11.46 L8.71,11.59 L8.44,13.44 L5.56,13.44 L5.27,11.59 L4.96,11.45 L3.46,12.57 L1.43,10.54 L2.54,9.02 L2.41,8.71 L0.56,8.44 L0.56,5.56 L2.41,5.27 L2.55,4.96 L1.43,3.46 L3.46,1.43 L4.98,2.54 L5.29,2.41 L5.56,0.56 L8.44,0.56 L8.73,2.41 L9.04,2.55 L10.54,1.43 L12.57,3.46 L11.46,4.98 L11.59,5.29Z" fill="#3a70c8"/><circle cx="7" cy="7" r="3.2" fill="#dce8f8"/><circle cx="7" cy="7" r="1.6" fill="#3a70c8" opacity="0.5"/></svg><div class="t" style="left:86.0px;top:809.7px;font-size:14.5px;color:#2e3436;">Polygonize</div>
</div>
<div class="r" style="left:1902px;top:196px;width:1px;height:816px;background:#d8d8d8"></div>
<div class="r" style="left:1632px;top:1016px;width:283px;height:29px;background:linear-gradient(#fbfbfb,#e2e2e2);border:1px solid #a8a8a8;border-radius:3px"></div>
<div class="t" style="left:1636.9px;top:1023.4px;font-size:14.5px;color:#2e3436;">Advanced interface</div>
<svg class="r" style="left:1900px;top:1021px" width="10" height="19" viewBox="0 0 10 19"><path d="M1 7h8l-4-6zM1 11h8l-4 6z" fill="#555"/></svg>
<svg class="r" style="left:1625px;top:589px" width="6" height="8" viewBox="0 0 6 8"><path d="M1 1h4M1 4h4M1 7h4" stroke="#bbb"/></svg>
<svg class="r" style="left:303px;top:589px" width="6" height="8" viewBox="0 0 6 8"><path d="M1 1h4M1 4h4M1 7h4" stroke="#bbb"/></svg>
<div class="r" style="left:0px;top:1046px;width:1915px;height:33px;background:#ededed"></div>
<div class="r" style="left:0px;top:1045px;width:309px;height:1px;background:#d2d2d2"></div>
<div class="r" style="left:1625px;top:1045px;width:290px;height:1px;background:#d2d2d2"></div>
<svg class="r" style="left:1096px;top:1054px" width="18" height="18" viewBox="0 0 18 18"><rect x="0.5" y="0.5" width="17" height="17" rx="2" fill="#d8d8d8" stroke="#777"/><circle cx="9" cy="9" r="5.5" fill="none" stroke="#222" stroke-width="1.5"/><path d="M4 4l10 10M6 12c2-1 5-4 6-6" stroke="#111" stroke-width="1.5"/></svg>
<div class="t" style="left:1125.0px;top:1054.9px;font-size:14.5px;color:#2e3436;">Coordinate:</div>
<div class="r" style="left:1209px;top:1053px;width:298px;height:19px;background:#fafafa;border:1px solid #9a9a9a;border-radius:3px"></div>
<div class="t" style="left:1057.0px;width:600px;text-align:center;top:1054.9px;font-size:14.5px;color:#2e3436;">2.87,-4.05</div>
<div class="t" style="left:1517.7px;top:1054.6px;font-size:14.5px;color:#2e3436;">Scale</div>
<div class="r" style="left:1566px;top:1054px;width:98px;height:18px;background:#fafafa;border:1px solid #9a9a9a;border-radius:3px"></div>
<div class="r" style="left:1641px;top:1055px;width:22px;height:16px;background:linear-gradient(#f4f4f4,#dedede);border-left:1px solid #bbb"></div>
<svg class="r" style="left:1646px;top:1059px" width="10" height="8" viewBox="0 0 10 8"><path d="M0 0h10l-5 8z" fill="#555"/></svg>
<div class="t" style="left:1566.0px;top:1054.9px;font-size:14.5px;color:#2e3436;">.3914000</div>
<svg class="r" style="left:1672px;top:1054px" width="18" height="18" viewBox="0 0 18 18"><rect x="0.5" y="0.5" width="17" height="17" rx="2" fill="#e4e4e4" stroke="#888"/><path d="M3 16L15 4" stroke="#555" stroke-width="2"/><circle cx="7" cy="6" r="3.5" fill="none" stroke="#e02020" stroke-width="1.3"/><path d="M4.5 8.5l5-5" stroke="#e02020" stroke-width="1.2"/></svg>
<svg class="r" style="left:1700px;top:1055px" width="15" height="15" viewBox="0 0 15 15"><defs><linearGradient id="cbg" x1="0" y1="0" x2="0" y2="1"><stop offset="0" stop-color="#d8d8d8"/><stop offset="1" stop-color="#bcbcbc"/></linearGradient></defs><rect x="0.5" y="0.5" width="13" height="13" rx="2" fill="url(#cbg)" stroke="#7a7a7a"/><path d="M3 7l3 3.5 7-9" fill="none" stroke="#222" stroke-width="2"/></svg>
<div class="t" style="left:1720.8px;top:1054.6px;font-size:14.5px;color:#2e3436;">Render</div>
<div class="t" style="left:1783.0px;top:1054.6px;font-size:14.5px;color:#2e3436;">EPSG:4326</div>
<svg class="r" style="left:1870px;top:1054px" width="18" height="18" viewBox="0 0 18 18"><rect x="0.5" y="0.5" width="17" height="17" rx="2" fill="#e0e0e0" stroke="#888"/><circle cx="9" cy="9" r="6" fill="none" stroke="#111" stroke-width="2"/><path d="M9 2v14M2 9h14" stroke="#111" stroke-width="1.5"/></svg>
<svg class="r" style="left:1896px;top:1054px" width="18" height="18" viewBox="0 0 18 18"><rect x="0.5" y="0.5" width="17" height="17" rx="2" fill="#e8e8e8" stroke="#888"/><path d="M9 3l6 12H3z" fill="#f0e040" stroke="#333" stroke-width="0.9"/><path d="M9 7v4M9 12.5v1.5" stroke="#111" stroke-width="1.2"/></svg>
<div class="r" style="left:955px;top:185px;width:650px;height:482px;background:#ededed;border-radius:6px 6px 0 0;box-shadow:0 4px 13px 3px rgba(0,0,0,0.62)"></div>
<div class="t" style="left:980.0px;width:600px;text-align:center;top:192.4px;font-size:14.8px;color:#2e3436;font-weight:bold;">Convex hull</div>
<div class="r" style="left:957px;top:250px;width:647px;height:331px;border:1px solid #c2c2c2;background:#eeeeee"></div>
<div class="r" style="left:1043px;top:220px;width:40px;height:31px;background:linear-gradient(#fdfdfd,#dedede);border:1px solid #c4c4c4;border-bottom:none;border-radius:3px 3px 0 0"></div>
<div class="r" style="left:1083px;top:220px;width:47px;height:31px;background:linear-gradient(#fdfdfd,#dedede);border:1px solid #c4c4c4;border-bottom:none;border-radius:3px 3px 0 0"></div>
<div class="r" style="left:956px;top:216px;width:87px;height:35px;background:#fafafa;border:1px solid #c4c4c4;border-bottom:none;border-radius:3px 3px 0 0"></div>
<div class="r" style="left:959px;top:221px;width:80px;height:25px;background:#dde8f8;border:1px solid #6f9ee8;border-radius:3px"></div>
<div class="t" style="left:963.5px;top:225.6px;font-size:13.9px;color:#2e3436;">Parameters</div>
<div class="t" style="left:1051.4px;top:226.2px;font-size:14.5px;color:#2e3436;">Log</div>
<div class="t" style="left:1091.6px;top:226.2px;font-size:14.5px;color:#2e3436;">Help</div>
<div class="t" style="left:978.6px;top:275.2px;font-size:14.5px;color:#2e3436;">Input layer</div>
<div class="r" style="left:979px;top:299px;width:570px;height:29px;background:linear-gradient(#fbfbfb,#e4e4e4);border:1px solid #a4a4a4;border-radius:3px"></div><div class="t" style="left:984.5px;top:305.9px;font-size:14.5px;color:#2e3436;">geotagged_photos [EPSG:4326]</div><svg class="r" style="left:1535px;top:305px" width="9" height="17" viewBox="0 0 9 17"><path d="M1 6h7l-3.5-5zM1 10h7l-3.5 5z" fill="#555"/></svg>
<div class="r" style="left:1553px;top:300px;width:29px;height:27px;background:linear-gradient(#fbfbfb,#e4e4e4);border:1px solid #a4a4a4;border-radius:3px"></div>
<svg class="r" style="left:1560px;top:306px" width="14" height="14" viewBox="0 0 14 14"><path d="M7 2a5 5 0 1 1-4.5 3" fill="none" stroke="#3a9a3a" stroke-width="2"/><path d="M1 2l2 4 4-2z" fill="#3a9a3a"/></svg>
<div class="t" style="left:978.2px;top:336.9px;font-size:14.5px;color:#2e3436;">Field (optional, only used if creating convex hulls by classes)</div>
<div class="r" style="left:979px;top:361px;width:602px;height:29px;background:linear-gradient(#fbfbfb,#e4e4e4);border:1px solid #a4a4a4;border-radius:3px"></div><div class="t" style="left:984.5px;top:367.9px;font-size:14.5px;color:#2e3436;">Filename</div><svg class="r" style="left:1567px;top:367px" width="9" height="17" viewBox="0 0 9 17"><path d="M1 6h7l-3.5-5zM1 10h7l-3.5 5z" fill="#555"/></svg>
<div class="t" style="left:978.6px;top:398.9px;font-size:14.5px;color:#2e3436;">Method</div>
<div class="r" style="left:979px;top:423px;width:602px;height:29px;background:linear-gradient(#fbfbfb,#e4e4e4);border:1px solid #a4a4a4;border-radius:3px"></div><div class="t" style="left:984.5px;top:429.9px;font-size:14.5px;color:#2e3436;">Create single minimum convex hull</div><svg class="r" style="left:1567px;top:429px" width="9" height="17" viewBox="0 0 9 17"><path d="M1 6h7l-3.5-5zM1 10h7l-3.5 5z" fill="#555"/></svg>
<div class="t" style="left:978.6px;top:461.1px;font-size:14.5px;color:#2e3436;">Convex hull</div>
<div class="r" style="left:979px;top:485px;width:515px;height:29px;background:#fafafa;border:1px solid #a4a4a4;border-radius:3px"></div>
<div class="t" style="left:982.8px;top:492.6px;font-size:14.5px;color:#8a8a8a;">[Save to temporary file]</div>
<div class="r" style="left:1498px;top:486px;width:83px;height:27px;background:linear-gradient(#d4e2f6,#b4cbee);border:1px solid #8aa4cc;border-radius:3px"></div>
<div class="t" style="left:1239.5px;width:600px;text-align:center;top:489.9px;font-size:14.5px;color:#2e3436;">...</div>
<svg class="r" style="left:981px;top:526px" width="15" height="15" viewBox="0 0 15 15"><defs><linearGradient id="cbg" x1="0" y1="0" x2="0" y2="1"><stop offset="0" stop-color="#d8d8d8"/><stop offset="1" stop-color="#bcbcbc"/></linearGradient></defs><rect x="0.5" y="0.5" width="13" height="13" rx="2" fill="url(#cbg)" stroke="#7a7a7a"/><path d="M3 7l3 3.5 7-9" fill="none" stroke="#222" stroke-width="2"/></svg>
<div class="t" style="left:1002.7px;top:525.2px;font-size:14.5px;color:#2e3436;">Open output file after running algorithm</div>
<div class="r" style="left:956px;top:606px;width:649px;height:28px;background:linear-gradient(#cacaca,#aeaeae);border:1px solid #a0a0a0;border-radius:14px"></div>
<div class="r" style="left:956px;top:616px;width:3px;height:9px;background:#4a80d8;border-radius:1px"></div>
<div class="t" style="left:980.0px;width:600px;text-align:center;top:613.1px;font-size:14.5px;color:#2e3436;">0%</div>
<div class="r" style="left:1339px;top:639px;width:83px;height:26px;background:linear-gradient(#fdfdfd,#e0e0e0);border:1px solid #9e9e9e;border-radius:3px"></div><div class="t" style="left:1080.5px;width:600px;text-align:center;top:643.9px;font-size:14.5px;color:#2e3436;">Run</div>
<div class="r" style="left:1430px;top:639px;width:83px;height:26px;background:linear-gradient(#f2f2f2,#e6e6e6);border:1px solid #c4c4c4;border-radius:3px"></div><div class="t" style="left:1171.5px;width:600px;text-align:center;top:643.9px;font-size:14.5px;color:#a8a8a8;">Cancel</div>
<div class="r" style="left:1521px;top:639px;width:83px;height:26px;background:linear-gradient(#fdfdfd,#e0e0e0);border:1px solid #9e9e9e;border-radius:3px"></div><div class="t" style="left:1262.5px;width:600px;text-align:center;top:643.9px;font-size:14.5px;color:#2e3436;">Close</div>
<div class="r" style="left:1449px;top:660px;width:9px;height:1px;background:#a8a8a8"></div>
<div class="r" style="left:1546px;top:660px;width:9px;height:1px;background:#2e3436"></div></body></html>
